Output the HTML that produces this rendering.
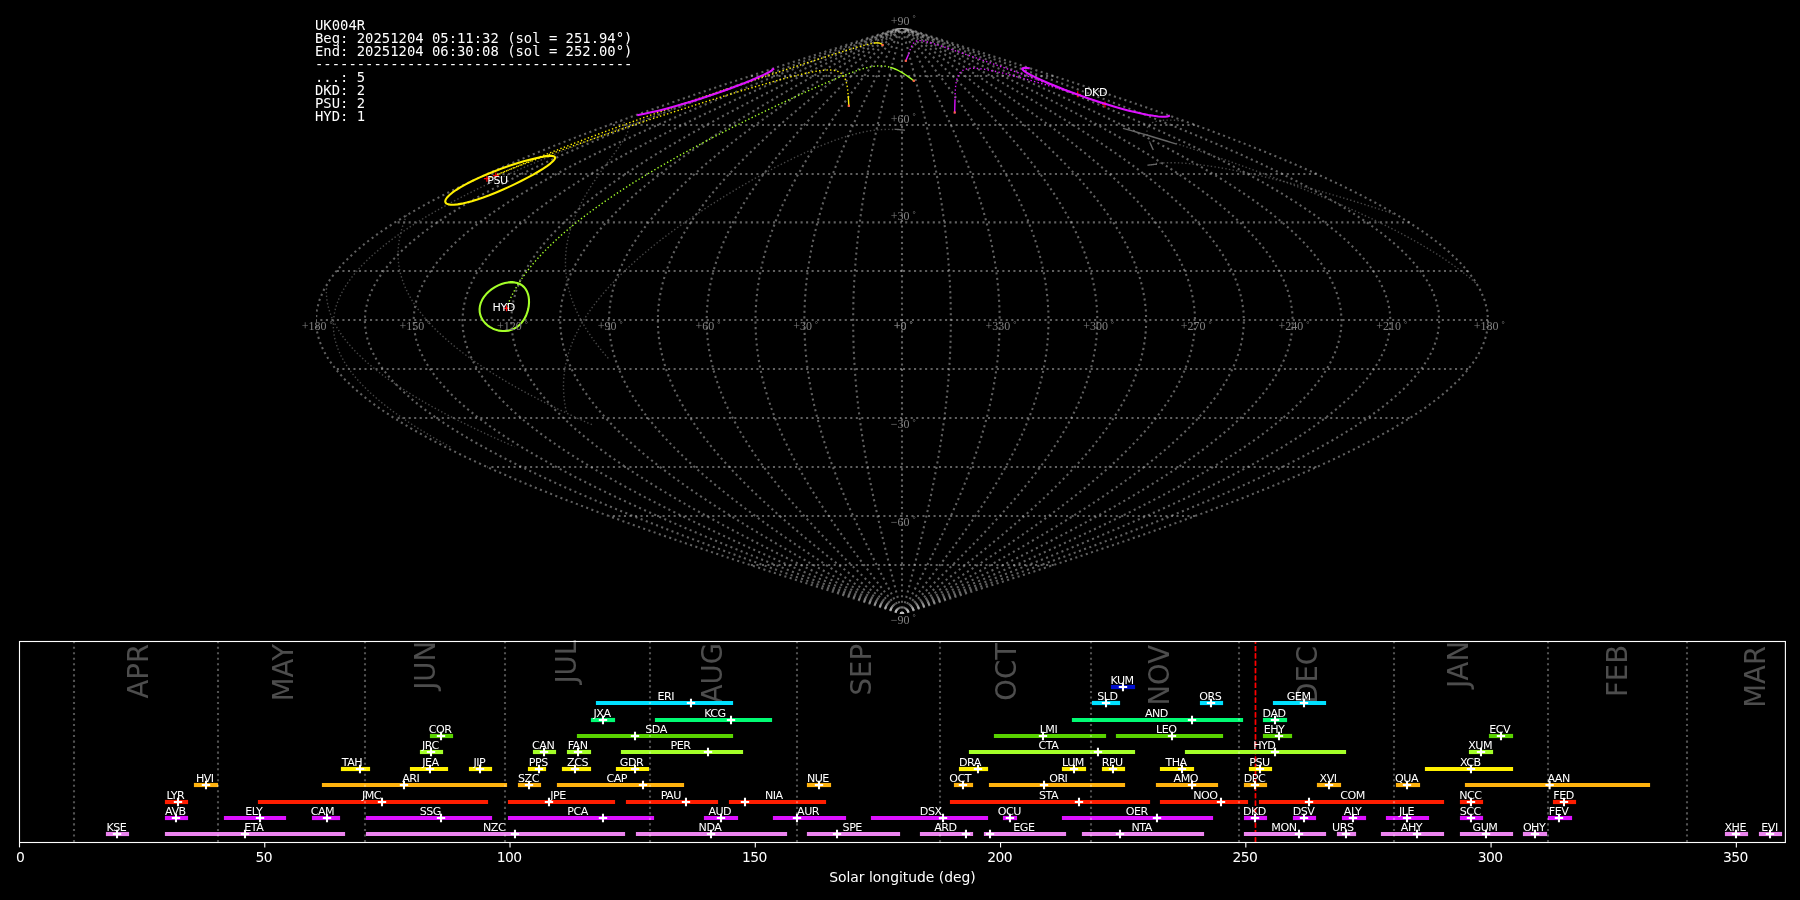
<!DOCTYPE html>
<html lang="en"><head><meta charset="utf-8"><title>UK004R shower association</title>
<style>html,body{margin:0;padding:0;background:#000;overflow:hidden}svg{display:block;filter:opacity(1)}</style></head>
<body>
<svg width="1800" height="900" viewBox="0 0 1800 900">
<rect width="1800" height="900" fill="#000"/>
<defs><clipPath id="c1"><rect x="316" y="27.9" width="1173.5" height="586.1"/></clipPath></defs>
<g clip-path="url(#c1)" fill="none">
<g stroke="#c0c0c0" stroke-opacity="0.5" stroke-width="2.08" stroke-dasharray="2.08 3.44">
<path d="M902.00 613.90 L902.00 604.12 L902.00 594.34 L902.00 584.56 L902.00 574.78 L902.00 565.00 L902.00 555.22 L902.00 545.44 L902.00 535.66 L902.00 525.88 L902.00 516.10 L902.00 506.32 L902.00 496.54 L902.00 486.76 L902.00 476.98 L902.00 467.20 L902.00 457.42 L902.00 447.64 L902.00 437.86 L902.00 428.08 L902.00 418.30 L902.00 408.52 L902.00 398.74 L902.00 388.96 L902.00 379.18 L902.00 369.40 L902.00 359.62 L902.00 349.84 L902.00 340.06 L902.00 330.28 L902.00 320.50 L902.00 310.72 L902.00 300.94 L902.00 291.16 L902.00 281.38 L902.00 271.60 L902.00 261.82 L902.00 252.04 L902.00 242.26 L902.00 232.48 L902.00 222.70 L902.00 212.92 L902.00 203.14 L902.00 193.36 L902.00 183.58 L902.00 173.80 L902.00 164.02 L902.00 154.24 L902.00 144.46 L902.00 134.68 L902.00 124.90 L902.00 115.12 L902.00 105.34 L902.00 95.56 L902.00 85.78 L902.00 76.00 L902.00 66.22 L902.00 56.44 L902.00 46.66 L902.00 36.88 L902.00 27.10"/>
<path d="M902.00 613.90 L899.44 604.12 L896.89 594.34 L894.36 584.56 L891.85 574.78 L889.36 565.00 L886.91 555.22 L884.50 545.44 L882.13 535.66 L879.83 525.88 L877.58 516.10 L875.40 506.32 L873.29 496.54 L871.26 486.76 L869.32 476.98 L867.46 467.20 L865.70 457.42 L864.04 447.64 L862.49 437.86 L861.04 428.08 L859.70 418.30 L858.48 408.52 L857.38 398.74 L856.40 388.96 L855.55 379.18 L854.82 369.40 L854.23 359.62 L853.76 349.84 L853.43 340.06 L853.23 330.28 L853.16 320.50 L853.23 310.72 L853.43 300.94 L853.76 291.16 L854.23 281.38 L854.82 271.60 L855.55 261.82 L856.40 252.04 L857.38 242.26 L858.48 232.48 L859.70 222.70 L861.04 212.92 L862.49 203.14 L864.04 193.36 L865.70 183.58 L867.46 173.80 L869.32 164.02 L871.26 154.24 L873.29 144.46 L875.40 134.68 L877.58 124.90 L879.83 115.12 L882.13 105.34 L884.50 95.56 L886.91 85.78 L889.36 76.00 L891.85 66.22 L894.36 56.44 L896.89 46.66 L899.44 36.88 L902.00 27.10"/>
<path d="M902.00 613.90 L896.89 604.12 L891.79 594.34 L886.72 584.56 L881.69 574.78 L876.72 565.00 L871.82 555.22 L866.99 545.44 L862.27 535.66 L857.65 525.88 L853.16 516.10 L848.80 506.32 L844.59 496.54 L840.53 486.76 L836.64 476.98 L832.93 467.20 L829.41 457.42 L826.09 447.64 L822.98 437.86 L820.08 428.08 L817.41 418.30 L814.97 408.52 L812.76 398.74 L810.81 388.96 L809.10 379.18 L807.65 369.40 L806.45 359.62 L805.52 349.84 L804.86 340.06 L804.45 330.28 L804.32 320.50 L804.45 310.72 L804.86 300.94 L805.52 291.16 L806.45 281.38 L807.65 271.60 L809.10 261.82 L810.81 252.04 L812.76 242.26 L814.97 232.48 L817.41 222.70 L820.08 212.92 L822.98 203.14 L826.09 193.36 L829.41 183.58 L832.93 173.80 L836.64 164.02 L840.53 154.24 L844.59 144.46 L848.80 134.68 L853.16 124.90 L857.65 115.12 L862.27 105.34 L866.99 95.56 L871.82 85.78 L876.72 76.00 L881.69 66.22 L886.72 56.44 L891.79 46.66 L896.89 36.88 L902.00 27.10"/>
<path d="M902.00 613.90 L894.33 604.12 L886.68 594.34 L879.08 584.56 L871.54 574.78 L864.08 565.00 L856.72 555.22 L849.49 545.44 L842.40 535.66 L835.48 525.88 L828.74 516.10 L822.20 506.32 L815.88 496.54 L809.79 486.76 L803.96 476.98 L798.39 467.20 L793.11 457.42 L788.13 447.64 L783.46 437.86 L779.12 428.08 L775.11 418.30 L771.45 408.52 L768.15 398.74 L765.21 388.96 L762.65 379.18 L760.47 369.40 L758.68 359.62 L757.28 349.84 L756.28 340.06 L755.68 330.28 L755.48 320.50 L755.68 310.72 L756.28 300.94 L757.28 291.16 L758.68 281.38 L760.47 271.60 L762.65 261.82 L765.21 252.04 L768.15 242.26 L771.45 232.48 L775.11 222.70 L779.12 212.92 L783.46 203.14 L788.13 193.36 L793.11 183.58 L798.39 173.80 L803.96 164.02 L809.79 154.24 L815.88 144.46 L822.20 134.68 L828.74 124.90 L835.48 115.12 L842.40 105.34 L849.49 95.56 L856.72 85.78 L864.08 76.00 L871.54 66.22 L879.08 56.44 L886.68 46.66 L894.33 36.88 L902.00 27.10"/>
<path d="M902.00 613.90 L891.78 604.12 L881.58 594.34 L871.44 584.56 L861.38 574.78 L851.44 565.00 L841.63 555.22 L831.99 545.44 L822.54 535.66 L813.31 525.88 L804.32 516.10 L795.60 506.32 L787.17 496.54 L779.06 486.76 L771.28 476.98 L763.86 467.20 L756.82 457.42 L750.18 447.64 L743.95 437.86 L738.16 428.08 L732.81 418.30 L727.93 408.52 L723.53 398.74 L719.62 388.96 L716.20 379.18 L713.30 369.40 L710.91 359.62 L709.05 349.84 L707.71 340.06 L706.91 330.28 L706.64 320.50 L706.91 310.72 L707.71 300.94 L709.05 291.16 L710.91 281.38 L713.30 271.60 L716.20 261.82 L719.62 252.04 L723.53 242.26 L727.93 232.48 L732.81 222.70 L738.16 212.92 L743.95 203.14 L750.18 193.36 L756.82 183.58 L763.86 173.80 L771.28 164.02 L779.06 154.24 L787.17 144.46 L795.60 134.68 L804.32 124.90 L813.31 115.12 L822.54 105.34 L831.99 95.56 L841.63 85.78 L851.44 76.00 L861.38 66.22 L871.44 56.44 L881.58 46.66 L891.78 36.88 L902.00 27.10"/>
<path d="M902.00 613.90 L889.22 604.12 L876.47 594.34 L863.80 584.56 L851.23 574.78 L838.80 565.00 L826.54 555.22 L814.49 545.44 L802.67 535.66 L791.14 525.88 L779.90 516.10 L769.00 506.32 L758.46 496.54 L748.32 486.76 L738.60 476.98 L729.32 467.20 L720.52 457.42 L712.22 447.64 L704.44 437.86 L697.20 428.08 L690.52 418.30 L684.42 408.52 L678.91 398.74 L674.02 388.96 L669.75 379.18 L666.12 369.40 L663.14 359.62 L660.81 349.84 L659.14 340.06 L658.13 330.28 L657.80 320.50 L658.13 310.72 L659.14 300.94 L660.81 291.16 L663.14 281.38 L666.12 271.60 L669.75 261.82 L674.02 252.04 L678.91 242.26 L684.42 232.48 L690.52 222.70 L697.20 212.92 L704.44 203.14 L712.22 193.36 L720.52 183.58 L729.32 173.80 L738.60 164.02 L748.32 154.24 L758.46 144.46 L769.00 134.68 L779.90 124.90 L791.14 115.12 L802.67 105.34 L814.49 95.56 L826.54 85.78 L838.80 76.00 L851.23 66.22 L863.80 56.44 L876.47 46.66 L889.22 36.88 L902.00 27.10"/>
<path d="M902.00 613.90 L886.66 604.12 L871.37 594.34 L856.16 584.56 L841.07 574.78 L826.16 565.00 L811.45 555.22 L796.98 545.44 L782.81 535.66 L768.96 525.88 L755.48 516.10 L742.40 506.32 L729.76 496.54 L717.58 486.76 L705.92 476.98 L694.79 467.20 L684.23 457.42 L674.27 447.64 L664.93 437.86 L656.24 428.08 L648.22 418.30 L640.90 408.52 L634.29 398.74 L628.42 388.96 L623.30 379.18 L618.95 369.40 L615.36 359.62 L612.57 349.84 L610.57 340.06 L609.36 330.28 L608.96 320.50 L609.36 310.72 L610.57 300.94 L612.57 291.16 L615.36 281.38 L618.95 271.60 L623.30 261.82 L628.42 252.04 L634.29 242.26 L640.90 232.48 L648.22 222.70 L656.24 212.92 L664.93 203.14 L674.27 193.36 L684.23 183.58 L694.79 173.80 L705.92 164.02 L717.58 154.24 L729.76 144.46 L742.40 134.68 L755.48 124.90 L768.96 115.12 L782.81 105.34 L796.98 95.56 L811.45 85.78 L826.16 76.00 L841.07 66.22 L856.16 56.44 L871.37 46.66 L886.66 36.88 L902.00 27.10"/>
<path d="M902.00 613.90 L884.11 604.12 L866.26 594.34 L848.52 584.56 L830.92 574.78 L813.51 565.00 L796.35 555.22 L779.48 545.44 L762.94 535.66 L746.79 525.88 L731.06 516.10 L715.80 506.32 L701.05 496.54 L686.85 486.76 L673.24 476.98 L660.25 467.20 L647.93 457.42 L636.31 447.64 L625.41 437.86 L615.28 428.08 L605.92 418.30 L597.38 408.52 L589.68 398.74 L582.83 388.96 L576.85 379.18 L571.77 369.40 L567.59 359.62 L564.33 349.84 L561.99 340.06 L560.59 330.28 L560.12 320.50 L560.59 310.72 L561.99 300.94 L564.33 291.16 L567.59 281.38 L571.77 271.60 L576.85 261.82 L582.83 252.04 L589.68 242.26 L597.38 232.48 L605.92 222.70 L615.28 212.92 L625.41 203.14 L636.31 193.36 L647.93 183.58 L660.25 173.80 L673.24 164.02 L686.85 154.24 L701.05 144.46 L715.80 134.68 L731.06 124.90 L746.79 115.12 L762.94 105.34 L779.48 95.56 L796.35 85.78 L813.51 76.00 L830.92 66.22 L848.52 56.44 L866.26 46.66 L884.11 36.88 L902.00 27.10"/>
<path d="M902.00 613.90 L881.55 604.12 L861.16 594.34 L840.88 584.56 L820.76 574.78 L800.87 565.00 L781.26 555.22 L761.98 545.44 L743.08 535.66 L724.62 525.88 L706.64 516.10 L689.20 506.32 L672.34 496.54 L656.11 486.76 L640.56 476.98 L625.72 467.20 L611.64 457.42 L598.35 447.64 L585.90 437.86 L574.31 428.08 L563.63 418.30 L553.87 408.52 L545.06 398.74 L537.23 388.96 L530.40 379.18 L524.59 369.40 L519.82 359.62 L516.09 349.84 L513.42 340.06 L511.82 330.28 L511.28 320.50 L511.82 310.72 L513.42 300.94 L516.09 291.16 L519.82 281.38 L524.59 271.60 L530.40 261.82 L537.23 252.04 L545.06 242.26 L553.87 232.48 L563.63 222.70 L574.31 212.92 L585.90 203.14 L598.35 193.36 L611.64 183.58 L625.72 173.80 L640.56 164.02 L656.11 154.24 L672.34 144.46 L689.20 134.68 L706.64 124.90 L724.62 115.12 L743.08 105.34 L761.98 95.56 L781.26 85.78 L800.87 76.00 L820.76 66.22 L840.88 56.44 L861.16 46.66 L881.55 36.88 L902.00 27.10"/>
<path d="M902.00 613.90 L879.00 604.12 L856.05 594.34 L833.24 584.56 L810.61 574.78 L788.23 565.00 L766.17 555.22 L744.48 545.44 L723.21 535.66 L702.44 525.88 L682.22 516.10 L662.60 506.32 L643.63 496.54 L625.38 486.76 L607.88 476.98 L591.18 467.20 L575.34 457.42 L560.40 447.64 L546.39 437.86 L533.35 428.08 L521.33 418.30 L510.35 408.52 L500.44 398.74 L491.64 388.96 L483.95 379.18 L477.42 369.40 L472.05 359.62 L467.85 349.84 L464.85 340.06 L463.04 330.28 L462.44 320.50 L463.04 310.72 L464.85 300.94 L467.85 291.16 L472.05 281.38 L477.42 271.60 L483.95 261.82 L491.64 252.04 L500.44 242.26 L510.35 232.48 L521.33 222.70 L533.35 212.92 L546.39 203.14 L560.40 193.36 L575.34 183.58 L591.18 173.80 L607.88 164.02 L625.38 154.24 L643.63 144.46 L662.60 134.68 L682.22 124.90 L702.44 115.12 L723.21 105.34 L744.48 95.56 L766.17 85.78 L788.23 76.00 L810.61 66.22 L833.24 56.44 L856.05 46.66 L879.00 36.88 L902.00 27.10"/>
<path d="M902.00 613.90 L876.44 604.12 L850.95 594.34 L825.60 584.56 L800.46 574.78 L775.59 565.00 L751.08 555.22 L726.97 545.44 L703.35 535.66 L680.27 525.88 L657.80 516.10 L636.00 506.32 L614.93 496.54 L594.64 486.76 L575.20 476.98 L556.65 467.20 L539.05 457.42 L522.44 447.64 L506.88 437.86 L492.39 428.08 L479.03 418.30 L466.83 408.52 L455.82 398.74 L446.04 388.96 L437.50 379.18 L430.24 369.40 L424.27 359.62 L419.61 349.84 L416.28 340.06 L414.27 330.28 L413.60 320.50 L414.27 310.72 L416.28 300.94 L419.61 291.16 L424.27 281.38 L430.24 271.60 L437.50 261.82 L446.04 252.04 L455.82 242.26 L466.83 232.48 L479.03 222.70 L492.39 212.92 L506.88 203.14 L522.44 193.36 L539.05 183.58 L556.65 173.80 L575.20 164.02 L594.64 154.24 L614.93 144.46 L636.00 134.68 L657.80 124.90 L680.27 115.12 L703.35 105.34 L726.97 95.56 L751.08 85.78 L775.59 76.00 L800.46 66.22 L825.60 56.44 L850.95 46.66 L876.44 36.88 L902.00 27.10"/>
<path d="M902.00 613.90 L873.88 604.12 L845.84 594.34 L817.96 584.56 L790.30 574.78 L762.95 565.00 L735.98 555.22 L709.47 545.44 L683.48 535.66 L658.10 525.88 L633.38 516.10 L609.40 506.32 L586.22 496.54 L563.90 486.76 L542.52 476.98 L522.11 467.20 L502.75 457.42 L484.49 447.64 L467.36 437.86 L451.43 428.08 L436.74 418.30 L423.32 408.52 L411.21 398.74 L400.44 388.96 L391.05 379.18 L383.07 369.40 L376.50 359.62 L371.37 349.84 L367.70 340.06 L365.50 330.28 L364.76 320.50 L365.50 310.72 L367.70 300.94 L371.37 291.16 L376.50 281.38 L383.07 271.60 L391.05 261.82 L400.44 252.04 L411.21 242.26 L423.32 232.48 L436.74 222.70 L451.43 212.92 L467.36 203.14 L484.49 193.36 L502.75 183.58 L522.11 173.80 L542.52 164.02 L563.90 154.24 L586.22 144.46 L609.40 134.68 L633.38 124.90 L658.10 115.12 L683.48 105.34 L709.47 95.56 L735.98 85.78 L762.95 76.00 L790.30 66.22 L817.96 56.44 L845.84 46.66 L873.88 36.88 L902.00 27.10"/>
<path d="M902.00 613.90 L871.33 604.12 L840.74 594.34 L810.32 584.56 L780.15 574.78 L750.31 565.00 L720.89 555.22 L691.97 545.44 L663.62 535.66 L635.93 525.88 L608.96 516.10 L582.80 506.32 L557.51 496.54 L533.17 486.76 L509.84 476.98 L487.58 467.20 L466.46 457.42 L446.53 447.64 L427.85 437.86 L410.47 428.08 L394.44 418.30 L379.80 408.52 L366.59 398.74 L354.85 388.96 L344.60 379.18 L335.89 369.40 L328.73 359.62 L323.14 349.84 L319.13 340.06 L316.72 330.28 L315.92 320.50 L316.72 310.72 L319.13 300.94 L323.14 291.16 L328.73 281.38 L335.89 271.60 L344.60 261.82 L354.85 252.04 L366.59 242.26 L379.80 232.48 L394.44 222.70 L410.47 212.92 L427.85 203.14 L446.53 193.36 L466.46 183.58 L487.58 173.80 L509.84 164.02 L533.17 154.24 L557.51 144.46 L582.80 134.68 L608.96 124.90 L635.93 115.12 L663.62 105.34 L691.97 95.56 L720.89 85.78 L750.31 76.00 L780.15 66.22 L810.32 56.44 L840.74 46.66 L871.33 36.88 L902.00 27.10"/>
<path d="M902.00 613.90 L932.67 604.12 L963.26 594.34 L993.68 584.56 L1023.85 574.78 L1053.69 565.00 L1083.11 555.22 L1112.03 545.44 L1140.38 535.66 L1168.07 525.88 L1195.04 516.10 L1221.20 506.32 L1246.49 496.54 L1270.83 486.76 L1294.16 476.98 L1316.42 467.20 L1337.54 457.42 L1357.47 447.64 L1376.15 437.86 L1393.53 428.08 L1409.56 418.30 L1424.20 408.52 L1437.41 398.74 L1449.15 388.96 L1459.39 379.18 L1468.11 369.40 L1475.27 359.62 L1480.86 349.84 L1484.87 340.06 L1487.28 330.28 L1488.08 320.50 L1487.28 310.72 L1484.87 300.94 L1480.86 291.16 L1475.27 281.38 L1468.11 271.60 L1459.39 261.82 L1449.15 252.04 L1437.41 242.26 L1424.20 232.48 L1409.56 222.70 L1393.53 212.92 L1376.15 203.14 L1357.47 193.36 L1337.54 183.58 L1316.42 173.80 L1294.16 164.02 L1270.83 154.24 L1246.49 144.46 L1221.20 134.68 L1195.04 124.90 L1168.07 115.12 L1140.38 105.34 L1112.03 95.56 L1083.11 85.78 L1053.69 76.00 L1023.85 66.22 L993.68 56.44 L963.26 46.66 L932.67 36.88 L902.00 27.10"/>
<path d="M902.00 613.90 L930.12 604.12 L958.16 594.34 L986.04 584.56 L1013.70 574.78 L1041.05 565.00 L1068.02 555.22 L1094.53 545.44 L1120.52 535.66 L1145.90 525.88 L1170.62 516.10 L1194.60 506.32 L1217.78 496.54 L1240.10 486.76 L1261.48 476.98 L1281.89 467.20 L1301.25 457.42 L1319.51 447.64 L1336.64 437.86 L1352.57 428.08 L1367.26 418.30 L1380.68 408.52 L1392.79 398.74 L1403.56 388.96 L1412.95 379.18 L1420.93 369.40 L1427.50 359.62 L1432.63 349.84 L1436.30 340.06 L1438.50 330.28 L1439.24 320.50 L1438.50 310.72 L1436.30 300.94 L1432.63 291.16 L1427.50 281.38 L1420.93 271.60 L1412.95 261.82 L1403.56 252.04 L1392.79 242.26 L1380.68 232.48 L1367.26 222.70 L1352.57 212.92 L1336.64 203.14 L1319.51 193.36 L1301.25 183.58 L1281.89 173.80 L1261.48 164.02 L1240.10 154.24 L1217.78 144.46 L1194.60 134.68 L1170.62 124.90 L1145.90 115.12 L1120.52 105.34 L1094.53 95.56 L1068.02 85.78 L1041.05 76.00 L1013.70 66.22 L986.04 56.44 L958.16 46.66 L930.12 36.88 L902.00 27.10"/>
<path d="M902.00 613.90 L927.56 604.12 L953.05 594.34 L978.40 584.56 L1003.54 574.78 L1028.41 565.00 L1052.92 555.22 L1077.03 545.44 L1100.65 535.66 L1123.73 525.88 L1146.20 516.10 L1168.00 506.32 L1189.07 496.54 L1209.36 486.76 L1228.80 476.98 L1247.35 467.20 L1264.95 457.42 L1281.56 447.64 L1297.12 437.86 L1311.61 428.08 L1324.97 418.30 L1337.17 408.52 L1348.18 398.74 L1357.96 388.96 L1366.50 379.18 L1373.76 369.40 L1379.73 359.62 L1384.39 349.84 L1387.72 340.06 L1389.73 330.28 L1390.40 320.50 L1389.73 310.72 L1387.72 300.94 L1384.39 291.16 L1379.73 281.38 L1373.76 271.60 L1366.50 261.82 L1357.96 252.04 L1348.18 242.26 L1337.17 232.48 L1324.97 222.70 L1311.61 212.92 L1297.12 203.14 L1281.56 193.36 L1264.95 183.58 L1247.35 173.80 L1228.80 164.02 L1209.36 154.24 L1189.07 144.46 L1168.00 134.68 L1146.20 124.90 L1123.73 115.12 L1100.65 105.34 L1077.03 95.56 L1052.92 85.78 L1028.41 76.00 L1003.54 66.22 L978.40 56.44 L953.05 46.66 L927.56 36.88 L902.00 27.10"/>
<path d="M902.00 613.90 L925.00 604.12 L947.95 594.34 L970.76 584.56 L993.39 574.78 L1015.77 565.00 L1037.83 555.22 L1059.52 545.44 L1080.79 535.66 L1101.56 525.88 L1121.78 516.10 L1141.40 506.32 L1160.37 496.54 L1178.62 486.76 L1196.12 476.98 L1212.82 467.20 L1228.66 457.42 L1243.60 447.64 L1257.61 437.86 L1270.65 428.08 L1282.67 418.30 L1293.65 408.52 L1303.56 398.74 L1312.36 388.96 L1320.05 379.18 L1326.58 369.40 L1331.95 359.62 L1336.15 349.84 L1339.15 340.06 L1340.96 330.28 L1341.56 320.50 L1340.96 310.72 L1339.15 300.94 L1336.15 291.16 L1331.95 281.38 L1326.58 271.60 L1320.05 261.82 L1312.36 252.04 L1303.56 242.26 L1293.65 232.48 L1282.67 222.70 L1270.65 212.92 L1257.61 203.14 L1243.60 193.36 L1228.66 183.58 L1212.82 173.80 L1196.12 164.02 L1178.62 154.24 L1160.37 144.46 L1141.40 134.68 L1121.78 124.90 L1101.56 115.12 L1080.79 105.34 L1059.52 95.56 L1037.83 85.78 L1015.77 76.00 L993.39 66.22 L970.76 56.44 L947.95 46.66 L925.00 36.88 L902.00 27.10"/>
<path d="M902.00 613.90 L922.45 604.12 L942.84 594.34 L963.12 584.56 L983.24 574.78 L1003.13 565.00 L1022.74 555.22 L1042.02 545.44 L1060.92 535.66 L1079.38 525.88 L1097.36 516.10 L1114.80 506.32 L1131.66 496.54 L1147.89 486.76 L1163.44 476.98 L1178.28 467.20 L1192.36 457.42 L1205.65 447.64 L1218.10 437.86 L1229.69 428.08 L1240.37 418.30 L1250.13 408.52 L1258.94 398.74 L1266.77 388.96 L1273.60 379.18 L1279.41 369.40 L1284.18 359.62 L1287.91 349.84 L1290.58 340.06 L1292.18 330.28 L1292.72 320.50 L1292.18 310.72 L1290.58 300.94 L1287.91 291.16 L1284.18 281.38 L1279.41 271.60 L1273.60 261.82 L1266.77 252.04 L1258.94 242.26 L1250.13 232.48 L1240.37 222.70 L1229.69 212.92 L1218.10 203.14 L1205.65 193.36 L1192.36 183.58 L1178.28 173.80 L1163.44 164.02 L1147.89 154.24 L1131.66 144.46 L1114.80 134.68 L1097.36 124.90 L1079.38 115.12 L1060.92 105.34 L1042.02 95.56 L1022.74 85.78 L1003.13 76.00 L983.24 66.22 L963.12 56.44 L942.84 46.66 L922.45 36.88 L902.00 27.10"/>
<path d="M902.00 613.90 L919.89 604.12 L937.74 594.34 L955.48 584.56 L973.08 574.78 L990.49 565.00 L1007.65 555.22 L1024.52 545.44 L1041.06 535.66 L1057.21 525.88 L1072.94 516.10 L1088.20 506.32 L1102.95 496.54 L1117.15 486.76 L1130.76 476.98 L1143.75 467.20 L1156.07 457.42 L1167.69 447.64 L1178.59 437.86 L1188.72 428.08 L1198.08 418.30 L1206.62 408.52 L1214.32 398.74 L1221.17 388.96 L1227.15 379.18 L1232.23 369.40 L1236.41 359.62 L1239.67 349.84 L1242.01 340.06 L1243.41 330.28 L1243.88 320.50 L1243.41 310.72 L1242.01 300.94 L1239.67 291.16 L1236.41 281.38 L1232.23 271.60 L1227.15 261.82 L1221.17 252.04 L1214.32 242.26 L1206.62 232.48 L1198.08 222.70 L1188.72 212.92 L1178.59 203.14 L1167.69 193.36 L1156.07 183.58 L1143.75 173.80 L1130.76 164.02 L1117.15 154.24 L1102.95 144.46 L1088.20 134.68 L1072.94 124.90 L1057.21 115.12 L1041.06 105.34 L1024.52 95.56 L1007.65 85.78 L990.49 76.00 L973.08 66.22 L955.48 56.44 L937.74 46.66 L919.89 36.88 L902.00 27.10"/>
<path d="M902.00 613.90 L917.34 604.12 L932.63 594.34 L947.84 584.56 L962.93 574.78 L977.84 565.00 L992.55 555.22 L1007.02 545.44 L1021.19 535.66 L1035.04 525.88 L1048.52 516.10 L1061.60 506.32 L1074.24 496.54 L1086.42 486.76 L1098.08 476.98 L1109.21 467.20 L1119.77 457.42 L1129.73 447.64 L1139.07 437.86 L1147.76 428.08 L1155.78 418.30 L1163.10 408.52 L1169.71 398.74 L1175.58 388.96 L1180.70 379.18 L1185.05 369.40 L1188.64 359.62 L1191.43 349.84 L1193.43 340.06 L1194.64 330.28 L1195.04 320.50 L1194.64 310.72 L1193.43 300.94 L1191.43 291.16 L1188.64 281.38 L1185.05 271.60 L1180.70 261.82 L1175.58 252.04 L1169.71 242.26 L1163.10 232.48 L1155.78 222.70 L1147.76 212.92 L1139.07 203.14 L1129.73 193.36 L1119.77 183.58 L1109.21 173.80 L1098.08 164.02 L1086.42 154.24 L1074.24 144.46 L1061.60 134.68 L1048.52 124.90 L1035.04 115.12 L1021.19 105.34 L1007.02 95.56 L992.55 85.78 L977.84 76.00 L962.93 66.22 L947.84 56.44 L932.63 46.66 L917.34 36.88 L902.00 27.10"/>
<path d="M902.00 613.90 L914.78 604.12 L927.53 594.34 L940.20 584.56 L952.77 574.78 L965.20 565.00 L977.46 555.22 L989.51 545.44 L1001.33 535.66 L1012.86 525.88 L1024.10 516.10 L1035.00 506.32 L1045.54 496.54 L1055.68 486.76 L1065.40 476.98 L1074.68 467.20 L1083.48 457.42 L1091.78 447.64 L1099.56 437.86 L1106.80 428.08 L1113.48 418.30 L1119.58 408.52 L1125.09 398.74 L1129.98 388.96 L1134.25 379.18 L1137.88 369.40 L1140.86 359.62 L1143.19 349.84 L1144.86 340.06 L1145.87 330.28 L1146.20 320.50 L1145.87 310.72 L1144.86 300.94 L1143.19 291.16 L1140.86 281.38 L1137.88 271.60 L1134.25 261.82 L1129.98 252.04 L1125.09 242.26 L1119.58 232.48 L1113.48 222.70 L1106.80 212.92 L1099.56 203.14 L1091.78 193.36 L1083.48 183.58 L1074.68 173.80 L1065.40 164.02 L1055.68 154.24 L1045.54 144.46 L1035.00 134.68 L1024.10 124.90 L1012.86 115.12 L1001.33 105.34 L989.51 95.56 L977.46 85.78 L965.20 76.00 L952.77 66.22 L940.20 56.44 L927.53 46.66 L914.78 36.88 L902.00 27.10"/>
<path d="M902.00 613.90 L912.22 604.12 L922.42 594.34 L932.56 584.56 L942.62 574.78 L952.56 565.00 L962.37 555.22 L972.01 545.44 L981.46 535.66 L990.69 525.88 L999.68 516.10 L1008.40 506.32 L1016.83 496.54 L1024.94 486.76 L1032.72 476.98 L1040.14 467.20 L1047.18 457.42 L1053.82 447.64 L1060.05 437.86 L1065.84 428.08 L1071.19 418.30 L1076.07 408.52 L1080.47 398.74 L1084.38 388.96 L1087.80 379.18 L1090.70 369.40 L1093.09 359.62 L1094.95 349.84 L1096.29 340.06 L1097.09 330.28 L1097.36 320.50 L1097.09 310.72 L1096.29 300.94 L1094.95 291.16 L1093.09 281.38 L1090.70 271.60 L1087.80 261.82 L1084.38 252.04 L1080.47 242.26 L1076.07 232.48 L1071.19 222.70 L1065.84 212.92 L1060.05 203.14 L1053.82 193.36 L1047.18 183.58 L1040.14 173.80 L1032.72 164.02 L1024.94 154.24 L1016.83 144.46 L1008.40 134.68 L999.68 124.90 L990.69 115.12 L981.46 105.34 L972.01 95.56 L962.37 85.78 L952.56 76.00 L942.62 66.22 L932.56 56.44 L922.42 46.66 L912.22 36.88 L902.00 27.10"/>
<path d="M902.00 613.90 L909.67 604.12 L917.32 594.34 L924.92 584.56 L932.46 574.78 L939.92 565.00 L947.28 555.22 L954.51 545.44 L961.60 535.66 L968.52 525.88 L975.26 516.10 L981.80 506.32 L988.12 496.54 L994.21 486.76 L1000.04 476.98 L1005.61 467.20 L1010.89 457.42 L1015.87 447.64 L1020.54 437.86 L1024.88 428.08 L1028.89 418.30 L1032.55 408.52 L1035.85 398.74 L1038.79 388.96 L1041.35 379.18 L1043.53 369.40 L1045.32 359.62 L1046.72 349.84 L1047.72 340.06 L1048.32 330.28 L1048.52 320.50 L1048.32 310.72 L1047.72 300.94 L1046.72 291.16 L1045.32 281.38 L1043.53 271.60 L1041.35 261.82 L1038.79 252.04 L1035.85 242.26 L1032.55 232.48 L1028.89 222.70 L1024.88 212.92 L1020.54 203.14 L1015.87 193.36 L1010.89 183.58 L1005.61 173.80 L1000.04 164.02 L994.21 154.24 L988.12 144.46 L981.80 134.68 L975.26 124.90 L968.52 115.12 L961.60 105.34 L954.51 95.56 L947.28 85.78 L939.92 76.00 L932.46 66.22 L924.92 56.44 L917.32 46.66 L909.67 36.88 L902.00 27.10"/>
<path d="M902.00 613.90 L907.11 604.12 L912.21 594.34 L917.28 584.56 L922.31 574.78 L927.28 565.00 L932.18 555.22 L937.01 545.44 L941.73 535.66 L946.35 525.88 L950.84 516.10 L955.20 506.32 L959.41 496.54 L963.47 486.76 L967.36 476.98 L971.07 467.20 L974.59 457.42 L977.91 447.64 L981.02 437.86 L983.92 428.08 L986.59 418.30 L989.03 408.52 L991.24 398.74 L993.19 388.96 L994.90 379.18 L996.35 369.40 L997.55 359.62 L998.48 349.84 L999.14 340.06 L999.55 330.28 L999.68 320.50 L999.55 310.72 L999.14 300.94 L998.48 291.16 L997.55 281.38 L996.35 271.60 L994.90 261.82 L993.19 252.04 L991.24 242.26 L989.03 232.48 L986.59 222.70 L983.92 212.92 L981.02 203.14 L977.91 193.36 L974.59 183.58 L971.07 173.80 L967.36 164.02 L963.47 154.24 L959.41 144.46 L955.20 134.68 L950.84 124.90 L946.35 115.12 L941.73 105.34 L937.01 95.56 L932.18 85.78 L927.28 76.00 L922.31 66.22 L917.28 56.44 L912.21 46.66 L907.11 36.88 L902.00 27.10"/>
<path d="M902.00 613.90 L904.56 604.12 L907.11 594.34 L909.64 584.56 L912.15 574.78 L914.64 565.00 L917.09 555.22 L919.50 545.44 L921.87 535.66 L924.17 525.88 L926.42 516.10 L928.60 506.32 L930.71 496.54 L932.74 486.76 L934.68 476.98 L936.54 467.20 L938.30 457.42 L939.96 447.64 L941.51 437.86 L942.96 428.08 L944.30 418.30 L945.52 408.52 L946.62 398.74 L947.60 388.96 L948.45 379.18 L949.18 369.40 L949.77 359.62 L950.24 349.84 L950.57 340.06 L950.77 330.28 L950.84 320.50 L950.77 310.72 L950.57 300.94 L950.24 291.16 L949.77 281.38 L949.18 271.60 L948.45 261.82 L947.60 252.04 L946.62 242.26 L945.52 232.48 L944.30 222.70 L942.96 212.92 L941.51 203.14 L939.96 193.36 L938.30 183.58 L936.54 173.80 L934.68 164.02 L932.74 154.24 L930.71 144.46 L928.60 134.68 L926.42 124.90 L924.17 115.12 L921.87 105.34 L919.50 95.56 L917.09 85.78 L914.64 76.00 L912.15 66.22 L909.64 56.44 L907.11 46.66 L904.56 36.88 L902.00 27.10"/>
<path d="M902.00 613.90 L902.00 613.90 L902.00 613.90 L902.00 613.90 L902.00 613.90 L902.00 613.90 L902.00 613.90 L902.00 613.90 L902.00 613.90 L902.00 613.90 L902.00 613.90 L902.00 613.90 L902.00 613.90"/>
<path d="M902.00 613.90 L902.00 613.90 L902.00 613.90 L902.00 613.90 L902.00 613.90 L902.00 613.90 L902.00 613.90 L902.00 613.90 L902.00 613.90 L902.00 613.90 L902.00 613.90 L902.00 613.90 L902.00 613.90"/>
<path d="M902.00 565.00 L889.36 565.00 L876.72 565.00 L864.08 565.00 L851.44 565.00 L838.80 565.00 L826.16 565.00 L813.51 565.00 L800.87 565.00 L788.23 565.00 L775.59 565.00 L762.95 565.00 L750.31 565.00"/>
<path d="M1053.69 565.00 L1041.05 565.00 L1028.41 565.00 L1015.77 565.00 L1003.13 565.00 L990.49 565.00 L977.84 565.00 L965.20 565.00 L952.56 565.00 L939.92 565.00 L927.28 565.00 L914.64 565.00 L902.00 565.00"/>
<path d="M902.00 516.00 L877.58 516.00 L853.16 516.00 L828.74 516.00 L804.32 516.00 L779.90 516.00 L755.48 516.00 L731.06 516.00 L706.64 516.00 L682.22 516.00 L657.80 516.00 L633.38 516.00 L608.96 516.00"/>
<path d="M1195.04 516.00 L1170.62 516.00 L1146.20 516.00 L1121.78 516.00 L1097.36 516.00 L1072.94 516.00 L1048.52 516.00 L1024.10 516.00 L999.68 516.00 L975.26 516.00 L950.84 516.00 L926.42 516.00 L902.00 516.00"/>
<path d="M902.00 467.00 L867.46 467.00 L832.93 467.00 L798.39 467.00 L763.86 467.00 L729.32 467.00 L694.79 467.00 L660.25 467.00 L625.72 467.00 L591.18 467.00 L556.65 467.00 L522.11 467.00 L487.58 467.00"/>
<path d="M1316.42 467.00 L1281.89 467.00 L1247.35 467.00 L1212.82 467.00 L1178.28 467.00 L1143.75 467.00 L1109.21 467.00 L1074.68 467.00 L1040.14 467.00 L1005.61 467.00 L971.07 467.00 L936.54 467.00 L902.00 467.00"/>
<path d="M902.00 418.00 L859.70 418.00 L817.41 418.00 L775.11 418.00 L732.81 418.00 L690.52 418.00 L648.22 418.00 L605.92 418.00 L563.63 418.00 L521.33 418.00 L479.03 418.00 L436.74 418.00 L394.44 418.00"/>
<path d="M1409.56 418.00 L1367.26 418.00 L1324.97 418.00 L1282.67 418.00 L1240.37 418.00 L1198.08 418.00 L1155.78 418.00 L1113.48 418.00 L1071.19 418.00 L1028.89 418.00 L986.59 418.00 L944.30 418.00 L902.00 418.00"/>
<path d="M902.00 369.00 L854.82 369.00 L807.65 369.00 L760.47 369.00 L713.30 369.00 L666.12 369.00 L618.95 369.00 L571.77 369.00 L524.59 369.00 L477.42 369.00 L430.24 369.00 L383.07 369.00 L335.89 369.00"/>
<path d="M1468.11 369.00 L1420.93 369.00 L1373.76 369.00 L1326.58 369.00 L1279.41 369.00 L1232.23 369.00 L1185.05 369.00 L1137.88 369.00 L1090.70 369.00 L1043.53 369.00 L996.35 369.00 L949.18 369.00 L902.00 369.00"/>
<path d="M902.00 320.00 L853.16 320.00 L804.32 320.00 L755.48 320.00 L706.64 320.00 L657.80 320.00 L608.96 320.00 L560.12 320.00 L511.28 320.00 L462.44 320.00 L413.60 320.00 L364.76 320.00 L315.92 320.00"/>
<path d="M1488.08 320.00 L1439.24 320.00 L1390.40 320.00 L1341.56 320.00 L1292.72 320.00 L1243.88 320.00 L1195.04 320.00 L1146.20 320.00 L1097.36 320.00 L1048.52 320.00 L999.68 320.00 L950.84 320.00 L902.00 320.00"/>
<path d="M902.00 271.00 L854.82 271.00 L807.65 271.00 L760.47 271.00 L713.30 271.00 L666.12 271.00 L618.95 271.00 L571.77 271.00 L524.59 271.00 L477.42 271.00 L430.24 271.00 L383.07 271.00 L335.89 271.00"/>
<path d="M1468.11 271.00 L1420.93 271.00 L1373.76 271.00 L1326.58 271.00 L1279.41 271.00 L1232.23 271.00 L1185.05 271.00 L1137.88 271.00 L1090.70 271.00 L1043.53 271.00 L996.35 271.00 L949.18 271.00 L902.00 271.00"/>
<path d="M902.00 222.40 L859.70 222.40 L817.41 222.40 L775.11 222.40 L732.81 222.40 L690.52 222.40 L648.22 222.40 L605.92 222.40 L563.63 222.40 L521.33 222.40 L479.03 222.40 L436.74 222.40 L394.44 222.40"/>
<path d="M1409.56 222.40 L1367.26 222.40 L1324.97 222.40 L1282.67 222.40 L1240.37 222.40 L1198.08 222.40 L1155.78 222.40 L1113.48 222.40 L1071.19 222.40 L1028.89 222.40 L986.59 222.40 L944.30 222.40 L902.00 222.40"/>
<path d="M902.00 174.00 L867.46 174.00 L832.93 174.00 L798.39 174.00 L763.86 174.00 L729.32 174.00 L694.79 174.00 L660.25 174.00 L625.72 174.00 L591.18 174.00 L556.65 174.00 L522.11 174.00 L487.58 174.00"/>
<path d="M1316.42 174.00 L1281.89 174.00 L1247.35 174.00 L1212.82 174.00 L1178.28 174.00 L1143.75 174.00 L1109.21 174.00 L1074.68 174.00 L1040.14 174.00 L1005.61 174.00 L971.07 174.00 L936.54 174.00 L902.00 174.00"/>
<path d="M902.00 125.00 L877.58 125.00 L853.16 125.00 L828.74 125.00 L804.32 125.00 L779.90 125.00 L755.48 125.00 L731.06 125.00 L706.64 125.00 L682.22 125.00 L657.80 125.00 L633.38 125.00 L608.96 125.00"/>
<path d="M1195.04 125.00 L1170.62 125.00 L1146.20 125.00 L1121.78 125.00 L1097.36 125.00 L1072.94 125.00 L1048.52 125.00 L1024.10 125.00 L999.68 125.00 L975.26 125.00 L950.84 125.00 L926.42 125.00 L902.00 125.00"/>
<path d="M902.00 76.00 L889.36 76.00 L876.72 76.00 L864.08 76.00 L851.44 76.00 L838.80 76.00 L826.16 76.00 L813.51 76.00 L800.87 76.00 L788.23 76.00 L775.59 76.00 L762.95 76.00 L750.31 76.00"/>
<path d="M1053.69 76.00 L1041.05 76.00 L1028.41 76.00 L1015.77 76.00 L1003.13 76.00 L990.49 76.00 L977.84 76.00 L965.20 76.00 L952.56 76.00 L939.92 76.00 L927.28 76.00 L914.64 76.00 L902.00 76.00"/>
<path d="M902.00 27.10 L902.00 27.10 L902.00 27.10 L902.00 27.10 L902.00 27.10 L902.00 27.10 L902.00 27.10 L902.00 27.10 L902.00 27.10 L902.00 27.10 L902.00 27.10 L902.00 27.10 L902.00 27.10"/>
<path d="M902.00 27.10 L902.00 27.10 L902.00 27.10 L902.00 27.10 L902.00 27.10 L902.00 27.10 L902.00 27.10 L902.00 27.10 L902.00 27.10 L902.00 27.10 L902.00 27.10 L902.00 27.10 L902.00 27.10"/>
</g>
<g stroke="#666" stroke-opacity="0.7" stroke-width="1.39" stroke-dasharray="1.39 2.29">
<path d="M893.27 129.47 L892.37 129.44 L891.46 129.41 L890.56 129.39 L889.65 129.38 L888.75 129.38 L887.84 129.38 L886.94 129.39 L886.03 129.41 L885.12 129.44 L884.21 129.47 L883.30 129.51 L882.39 129.56 L881.47 129.61 L880.56 129.67 L879.64 129.74 L878.72 129.82 L877.80 129.90 L876.88 129.99 L875.96 130.08 L875.04 130.19 L874.11 130.30 L873.19 130.42 L872.26 130.54 L871.33 130.67 L870.39 130.81 L869.46 130.96 L868.52 131.11 L867.59 131.27 L866.65 131.44 L865.70 131.61 L864.76 131.79 L863.81 131.98 L862.86 132.17 L861.91 132.37 L860.96 132.58 L860.01 132.79 L859.05 133.01 L858.09 133.24 L857.13 133.47 L856.16 133.71 L855.20 133.95 L854.23 134.21 L853.26 134.46 L852.28 134.73 L851.31 135.00 L850.33 135.28 L849.35 135.56 L848.36 135.85 L847.38 136.14 L846.39 136.44 L845.40 136.75 L844.40 137.06 L843.41 137.38 L842.41 137.70 L841.41 138.03 L840.40 138.37 L839.40 138.71 L838.39 139.06 L837.38 139.41 L836.36 139.77 L835.35 140.13 L834.33 140.50 L833.31 140.87 L832.28 141.25 L831.26 141.63 L830.23 142.02 L829.20 142.42 L828.17 142.82 L827.13 143.22 L826.09 143.63 L825.05 144.04 L824.01 144.46 L822.96 144.88 L821.92 145.31 L820.87 145.74 L819.81 146.18 L818.76 146.62 L817.70 147.07 L816.64 147.52 L815.58 147.98 L814.52 148.44 L813.45 148.90 L812.39 149.37 L811.32 149.84 L810.25 150.32 L809.17 150.80 L808.10 151.28 L807.02 151.77 L805.94 152.26 L804.86 152.76 L803.78 153.26 L802.69 153.76 L801.61 154.27 L800.52 154.78 L799.43 155.30 L798.34 155.82 L797.24 156.34 L796.15 156.86 L795.05 157.39 L793.95 157.93 L792.86 158.46 L791.75 159.00 L790.65 159.55 L789.55 160.09 L788.44 160.64 L787.34 161.19 L786.23 161.75 L785.12 162.31 L784.01 162.87 L782.90 163.44 L781.79 164.00 L780.68 164.57 L779.57 165.15 L778.45 165.73 L777.34 166.31 L776.22 166.89 L775.10 167.47 L773.99 168.06 L772.87 168.65 L771.75 169.25 L770.63 169.84 L769.51 170.44 L768.39 171.04 L767.27 171.64 L766.15 172.25 L765.03 172.86 L763.90 173.47 L762.78 174.08 L761.66 174.70 L760.54 175.32 L759.41 175.94 L758.29 176.56 L757.17 177.19 L756.04 177.81 L754.92 178.44 L753.80 179.08 L752.67 179.71 L751.55 180.35 L750.43 180.98 L749.30 181.62 L748.18 182.27 L747.06 182.91 L745.94 183.56 L744.82 184.20 L743.70 184.85 L742.58 185.51 L741.46 186.16 L740.34 186.81 L739.22 187.47 L738.10 188.13 L736.98 188.79 L735.87 189.45 L734.75 190.12 L733.64 190.79 L732.52 191.45 L731.41 192.12 L730.30 192.79 L729.19 193.47 L728.08 194.14 L726.97 194.82 L725.86 195.49 L724.75 196.17 L723.65 196.85 L722.54 197.54 L721.44 198.22 L720.34 198.90 L719.24 199.59 L718.14 200.28 L717.04 200.97 L715.95 201.66 L714.85 202.35 L713.76 203.04 L712.67 203.74 L711.58 204.43 L710.49 205.13 L709.41 205.83 L708.32 206.53 L707.24 207.23 L706.16 207.93 L705.08 208.63 L704.01 209.34 L702.93 210.05 L701.86 210.75 L700.79 211.46 L699.72 212.17 L698.66 212.88 L697.59 213.59 L696.53 214.30 L695.47 215.02 L694.41 215.73 L693.36 216.45 L692.30 217.16 L691.25 217.88 L690.21 218.60 L689.16 219.32 L688.12 220.04 L687.08 220.76 L686.04 221.49 L685.01 222.21 L683.97 222.93 L682.94 223.66 L681.92 224.39 L680.89 225.11 L679.87 225.84 L678.85 226.57 L677.83 227.30 L676.82 228.03 L675.81 228.76 L674.80 229.49 L673.80 230.23 L672.80 230.96 L671.80 231.70 L670.80 232.43 L669.81 233.17 L668.82 233.90 L667.84 234.64 L666.86 235.38 L665.88 236.12 L664.90 236.86 L663.93 237.60 L662.96 238.34 L661.99 239.08 L661.03 239.83 L660.07 240.57 L659.11 241.31 L658.16 242.06 L657.21 242.80 L656.27 243.55 L655.32 244.30 L654.39 245.04 L653.45 245.79 L652.52 246.54 L651.59 247.29 L650.67 248.04 L649.75 248.79 L648.83 249.54 L647.92 250.29 L647.01 251.04 L646.11 251.79 L645.21 252.55 L644.31 253.30 L643.42 254.05 L642.53 254.81 L641.64 255.56 L640.76 256.32 L639.89 257.07 L639.01 257.83 L638.15 258.59 L637.28 259.34 L636.42 260.10 L635.56 260.86 L634.71 261.62 L633.86 262.38 L633.02 263.14 L632.18 263.90 L631.35 264.66 L630.51 265.42 L629.69 266.18 L628.87 266.94 L628.05 267.70 L627.23 268.46 L626.43 269.23 L625.62 269.99 L624.82 270.75 L624.03 271.52 L623.23 272.28 L622.45 273.04 L621.67 273.81 L620.89 274.57 L620.12 275.34 L619.35 276.10 L618.58 276.87 L617.82 277.64 L617.07 278.40 L616.32 279.17 L615.58 279.94 L614.84 280.70 L614.10 281.47 L613.37 282.24 L612.64 283.01 L611.92 283.78 L611.21 284.55 L610.50 285.31 L609.79 286.08 L609.09 286.85 L608.39 287.62 L607.70 288.39 L607.01 289.16 L606.33 289.93 L605.66 290.70 L604.98 291.47 L604.32 292.24 L603.65 293.01 L603.00 293.79 L602.35 294.56 L601.70 295.33 L601.06 296.10 L600.42 296.87 L599.79 297.64 L599.16 298.42 L598.54 299.19 L597.93 299.96 L597.32 300.73 L596.71 301.51 L596.11 302.28 L595.52 303.05 L594.93 303.82 L594.34 304.60 L593.76 305.37 L593.19 306.14 L592.62 306.92 L592.06 307.69 L591.50 308.46 L590.95 309.24 L590.40 310.01 L589.86 310.79 L589.32 311.56 L588.79 312.33 L588.26 313.11 L587.74 313.88 L587.23 314.66 L586.72 315.43 L586.21 316.20 L585.71 316.98 L585.22 317.75 L584.73 318.53 L584.25 319.30 L583.77 320.08 L583.30 320.85 L582.83 321.62 L582.37 322.40 L581.92 323.17 L581.47 323.95 L581.02 324.72 L580.58 325.49 L580.15 326.27 L579.72 327.04 L579.30 327.82 L578.88 328.59 L578.47 329.36 L578.07 330.14 L577.67 330.91 L577.27 331.69 L576.88 332.46 L576.50 333.23 L576.12 334.01 L575.75 334.78 L575.38 335.55 L575.02 336.33 L574.67 337.10 L574.32 337.87 L573.97 338.65 L573.63 339.42 L573.30 340.19 L572.97 340.96 L572.65 341.74 L572.33 342.51 L572.02 343.28 L571.72 344.05 L571.42 344.82 L571.13 345.60 L570.84 346.37 L570.55 347.14 L570.28 347.91 L570.01 348.68 L569.74 349.45 L569.48 350.22 L569.23 350.99 L568.98 351.76 L568.73 352.53 L568.50 353.30 L568.26 354.07 L568.04 354.84 L567.82 355.61 L567.60 356.38 L567.39 357.15 L567.19 357.92 L566.99 358.69 L566.79 359.45 L566.61 360.22 L566.42 360.99 L566.25 361.76 L566.08 362.52 L565.91 363.29 L565.75 364.05 L565.60 364.82 L565.45 365.59 L565.30 366.35 L565.17 367.12 L565.03 367.88 L564.91 368.65 L564.79 369.41 L564.67 370.17 L564.56 370.94 L564.46 371.70 L564.36 372.46 L564.26 373.22 L564.17 373.99 L564.09 374.75 L564.01 375.51 L563.94 376.27 L563.87 377.03 L563.81 377.79 L563.75 378.55 L563.70 379.31 L563.66 380.07 L563.62 380.82 L563.58 381.58 L563.55 382.34 L563.53 383.10 L563.51 383.85 L563.50 384.61 L563.49 385.36 L563.48 386.12 L563.48 386.87 L563.49 387.63 L563.50 388.38 L563.52 389.13 L563.54 389.89 L563.57 390.64 L563.60 391.39 L563.64 392.14 L563.68 392.89 L563.73 393.64 L563.78 394.39 L563.84 395.14 L563.90 395.88 L563.97 396.63 L564.04 397.38 L564.12 398.12 L564.20 398.87 L564.29 399.61 L564.38 400.36 L564.48 401.10 L564.58 401.84 L564.69 402.59 L564.80 403.33 L564.91 404.07 L565.03 404.81 L565.16 405.55 L565.29 406.29 L565.42 407.02 L565.56 407.76 L565.71 408.50 L565.85 409.23 L566.01 409.97 L566.16 410.70 L566.32 411.44 L566.49 412.17 L566.66 412.90 L566.84 413.63"/>
<path d="M1175.82 143.41 L1177.75 144.03 L1179.68 144.65 L1181.61 145.28 L1183.55 145.91 L1185.49 146.54 L1187.43 147.18 L1189.38 147.81 L1191.33 148.46 L1193.28 149.10 L1195.23 149.75 L1197.18 150.40 L1199.14 151.05 L1201.10 151.70 L1203.06 152.36 L1205.02 153.02 L1206.98 153.68 L1208.95 154.35 L1210.91 155.02 L1212.88 155.69 L1214.85 156.36 L1216.82 157.04 L1218.79 157.71 L1220.76 158.39 L1222.73 159.08 L1224.70 159.76 L1226.67 160.45 L1228.64 161.13 L1230.60 161.83 L1232.57 162.52 L1234.54 163.21 L1236.51 163.91 L1238.48 164.61 L1240.45 165.31 L1242.41 166.01 L1244.38 166.72 L1246.34 167.42 L1248.30 168.13 L1250.26 168.84 L1252.22 169.55 L1254.18 170.27 L1256.14 170.98 L1258.09 171.70 L1260.04 172.42 L1261.99 173.14 L1263.94 173.86 L1265.89 174.59 L1267.83 175.31 L1269.77 176.04 L1271.71 176.77 L1273.64 177.50 L1275.58 178.23 L1277.51 178.96 L1279.43 179.70 L1281.36 180.43 L1283.28 181.17 L1285.19 181.91 L1287.11 182.65 L1289.02 183.39 L1290.92 184.13 L1292.82 184.88 L1294.72 185.62 L1296.62 186.37 L1298.51 187.12 L1300.39 187.86 L1302.27 188.61 L1304.15 189.37 L1306.03 190.12 L1307.89 190.87 L1309.76 191.63 L1311.62 192.38 L1313.47 193.14 L1315.32 193.90 L1317.17 194.66 L1319.01 195.42 L1320.84 196.18 L1322.67 196.94 L1324.50 197.70 L1326.32 198.47 L1328.13 199.23 L1329.94 200.00 L1331.74 200.76 L1333.54 201.53 L1335.33 202.30 L1337.12 203.07 L1338.90 203.84 L1340.67 204.61 L1342.44 205.39 L1344.20 206.16 L1345.95 206.93 L1347.70 207.71 L1349.45 208.48 L1351.18 209.26 L1352.91 210.04 L1354.64 210.82 L1356.35 211.59 L1358.06 212.37 L1359.77 213.15 L1361.46 213.94 L1363.15 214.72 L1364.83 215.50 L1366.51 216.28 L1368.18 217.07 L1369.84 217.85 L1371.49 218.64 L1373.14 219.42 L1374.78 220.21 L1376.41 221.00 L1378.04 221.78 L1379.65 222.57 L1381.26 223.36 L1382.86 224.15 L1384.46 224.94 L1386.04 225.73 L1387.62 226.53 L1389.19 227.32 L1390.76 228.11 L1392.31 228.90 L1393.86 229.70 L1395.40 230.49 L1396.93 231.29 L1398.45 232.08 L1399.96 232.88 L1401.47 233.67 L1402.96 234.47 L1404.45 235.27 L1405.93 236.07 L1407.40 236.86 L1408.86 237.66 L1410.32 238.46 L1411.76 239.26 L1413.20 240.06 L1414.63 240.86 L1416.05 241.67 L1417.46 242.47 L1418.86 243.27 L1420.25 244.07 L1421.63 244.87 L1423.00 245.68 L1424.37 246.48 L1425.72 247.29 L1427.07 248.09 L1428.41 248.89 L1429.73 249.70 L1431.05 250.51 L1432.36 251.31 L1433.66 252.12 L1434.95 252.92 L1436.23 253.73 L1437.50 254.54 L1438.76 255.35 L1440.01 256.15 L1441.25 256.96 L1442.48 257.77 L1443.70 258.58 L1444.92 259.39 L1446.12 260.20 L1447.31 261.01 L1448.49 261.82 L1449.66 262.63 L1450.83 263.44 L1451.98 264.25 L1453.12 265.06 L1454.25 265.87 L1455.37 266.69 L1456.48 267.50 L1457.58 268.31 L1458.67 269.12 L1459.75 269.94 L1460.82 270.75 L1461.88 271.56 L1462.93 272.38 L1463.97 273.19 L1465.00 274.00 L1466.02 274.82 L1467.02 275.63 L1468.02 276.45 L1469.00 277.26 L1469.98 278.08 L1470.94 278.89 L1471.90 279.71 L1472.84 280.52 L1473.77 281.34 L1474.69 282.15 L1475.60 282.97 L1476.50 283.79"/>
<path d="M326.81 284.60 L326.72 285.42 L326.64 286.24 L326.58 287.05 L326.52 287.87 L326.47 288.69 L326.44 289.51 L326.41 290.32 L326.40 291.14 L326.40 291.96 L326.41 292.78 L326.43 293.59 L326.46 294.41 L326.50 295.23 L326.55 296.05 L326.61 296.87 L326.69 297.69 L326.77 298.51 L326.87 299.32 L326.98 300.14 L327.10 300.96 L327.23 301.78 L327.37 302.60 L327.52 303.42 L327.68 304.24 L327.85 305.06 L328.04 305.88 L328.24 306.70 L328.44 307.52 L328.66 308.34 L328.89 309.16 L329.13 309.98 L329.38 310.80 L329.64 311.61 L329.91 312.43 L330.20 313.25 L330.49 314.07 L330.80 314.89 L331.12 315.71 L331.45 316.53 L331.78 317.35 L332.13 318.17 L332.50 318.99 L332.87 319.81 L333.25 320.63 L333.64 321.45 L334.05 322.27 L334.46 323.09 L334.89 323.91 L335.33 324.73 L335.78 325.55 L336.24 326.37 L336.71 327.19 L337.19 328.01 L337.68 328.83 L338.18 329.65 L338.70 330.47 L339.22 331.29 L339.76 332.11 L340.31 332.93 L340.86 333.75 L341.43 334.57 L342.01 335.39 L342.60 336.21 L343.20 337.03 L343.81 337.85 L344.43 338.67 L345.06 339.49 L345.71 340.31 L346.36 341.13 L347.03 341.94 L347.70 342.76 L348.39 343.58 L349.08 344.40 L349.79 345.22 L350.51 346.04 L351.23 346.86 L351.97 347.67 L352.72 348.49 L353.48 349.31 L354.25 350.13 L355.03 350.94 L355.82 351.76 L356.62 352.58 L357.44 353.40 L358.26 354.21 L359.09 355.03 L359.93 355.85 L360.78 356.66 L361.65 357.48 L362.52 358.30 L363.40 359.11 L364.30 359.93 L365.20 360.74 L366.12 361.56 L367.04 362.38 L367.97 363.19 L368.92 364.01 L369.87 364.82 L370.84 365.63 L371.81 366.45 L372.79 367.26 L373.79 368.08 L374.79 368.89 L375.81 369.70 L376.83 370.52 L377.86 371.33 L378.90 372.14 L379.96 372.96 L381.02 373.77 L382.09 374.58 L383.17 375.39 L384.26 376.20 L385.36 377.01 L386.47 377.83 L387.59 378.64 L388.72 379.45 L389.86 380.26 L391.01 381.07 L392.17 381.88 L393.33 382.69 L394.51 383.49 L395.69 384.30 L396.89 385.11 L398.09 385.92 L399.30 386.73 L400.52 387.53 L401.75 388.34 L402.99 389.15 L404.24 389.95 L405.50 390.76 L406.76 391.56 L408.04 392.37 L409.32 393.17 L410.61 393.98 L411.92 394.78 L413.23 395.59 L414.54 396.39 L415.87 397.19 L417.21 397.99 L418.55 398.80 L419.90 399.60 L421.26 400.40 L422.63 401.20 L424.01 402.00 L425.39 402.80 L426.79 403.60 L428.19 404.40 L429.60 405.20 L431.01 405.99 L432.44 406.79 L433.87 407.59 L435.32 408.38 L436.76 409.18 L438.22 409.97 L439.69 410.77 L441.16 411.56 L442.64 412.36 L444.13 413.15 L445.62 413.94 L447.12 414.73 L448.63 415.53 L450.15 416.32 L451.68 417.11 L453.21 417.90 L454.75 418.69 L456.29 419.47 L457.85 420.26 L459.41 421.05 L460.97 421.84 L462.55 422.62 L464.13 423.41 L465.72 424.19 L467.31 424.97 L468.91 425.76 L470.52 426.54 L472.13 427.32 L473.75 428.10 L475.38 428.88 L477.01 429.66 L478.65 430.44 L480.30 431.22 L481.95 432.00 L483.61 432.77 L485.27 433.55 L486.94 434.32 L488.61 435.10 L490.29 435.87 L491.98 436.64 L493.67 437.41 L495.37 438.18 L497.08 438.95 L498.78 439.72 L500.50 440.49 L502.22 441.25 L503.94 442.02 L505.67 442.78 L507.41 443.55 L509.15 444.31 L510.89 445.07 L512.64 445.83 L514.39 446.59"/>
<path d="M1149.83 142.43 L1149.63 141.92 L1149.43 141.42 L1149.23 140.92 L1149.04 140.42 L1148.86 139.93 L1148.69 139.44 L1148.52 138.95 L1148.36 138.48 L1148.21 138.00 L1148.06 137.53 L1147.93 137.07 L1147.80 136.61 L1147.68 136.15 L1147.57 135.70 L1147.46 135.26 L1147.37 134.82 L1147.28 134.38 L1147.21 133.95 L1147.14 133.53 L1147.09 133.11 L1147.04 132.70 L1147.00 132.29 L1146.98 131.89 L1146.96 131.49 L1146.96 131.10 L1146.97 130.72 L1146.99 130.34 L1147.02 129.96 L1147.06 129.60 L1147.11 129.23 L1147.18 128.88 L1147.26 128.53 L1147.35 128.19 L1147.45 127.85 L1147.57 127.52 L1147.70 127.20 L1147.85 126.88 L1148.00 126.57 L1148.18 126.27 L1148.36 125.97 L1148.57 125.68 L1148.78 125.40 L1149.01 125.12 L1149.26 124.85 L1149.52 124.59 L1149.80 124.33 L1150.09 124.08 L1150.40 123.84 L1150.73 123.60 L1151.07 123.38 L1151.43 123.16 L1151.81 122.94 L1152.20 122.74 L1152.61 122.54 L1153.04 122.35 L1153.49 122.17 L1153.96 121.99 L1154.44 121.83 L1154.94 121.67 L1155.46 121.51 L1156.00 121.37 L1156.56 121.23 L1157.14 121.10 L1157.73 120.98 L1158.35 120.87 L1158.99 120.76 L1159.64 120.67 L1160.32 120.58 L1161.01 120.50 L1161.73 120.42 L1162.47 120.36 L1163.22 120.30 L1164.00 120.25 L1164.80 120.21 L1165.62 120.18 L1166.46 120.15 L1167.32 120.13 L1168.20 120.13 L1169.11 120.12 L1170.03 120.13 L1170.98 120.15 L1171.95 120.17 L1172.93 120.20 L1173.95 120.24 L1174.98 120.29 L1176.03 120.35 L1177.11 120.41 L1178.20 120.48 L1179.32 120.56 L1180.46 120.65 L1181.62 120.74 L1182.81 120.85 L1184.01 120.96"/>
<path d="M620.04 121.08 L620.59 121.21 L621.12 121.34 L621.62 121.49 L622.11 121.64 L622.57 121.79 L623.02 121.96 L623.44 122.13 L623.84 122.32 L624.23 122.50 L624.59 122.70 L624.94 122.90 L625.26 123.12 L625.57 123.33 L625.86 123.56 L626.12 123.79 L626.38 124.03 L626.61 124.28 L626.82 124.54 L627.02 124.80 L627.20 125.07 L627.37 125.34 L627.51 125.62 L627.64 125.91 L627.76 126.21 L627.86 126.51 L627.94 126.82 L628.00 127.14 L628.06 127.46 L628.09 127.79 L628.11 128.12 L628.12 128.47 L628.11 128.81 L628.09 129.17 L628.06 129.53 L628.01 129.89 L627.95 130.26 L627.87 130.64 L627.79 131.03 L627.69 131.42 L627.57 131.81 L627.45 132.21 L627.31 132.62 L627.17 133.03 L627.01 133.45 L626.84 133.87 L626.66 134.30 L626.47 134.73 L626.26 135.17 L626.05 135.62 L625.83 136.07 L625.60 136.52 L625.36 136.98 L625.11 137.44 L624.85 137.91 L624.59 138.38 L624.31 138.86 L624.03 139.35 L623.73 139.83 L623.43 140.33 L623.13 140.82 L622.81 141.32 L622.49 141.83 L622.16 142.34 L621.82 142.85 L621.48 143.37 L621.13 143.89 L620.78 144.42 L620.41 144.95 L620.05 145.48 L619.67 146.02 L619.30 146.56 L618.91 147.11 L618.52 147.66 L618.13 148.21 L617.73 148.76 L617.33 149.32 L616.92 149.89 L616.51 150.46 L616.09 151.03 L615.67 151.60 L615.25 152.18 L614.82 152.76 L614.39 153.34 L613.95 153.93 L613.52 154.52 L613.08 155.11 L612.63 155.71 L612.19 156.31 L611.74 156.91 L611.29 157.52 L610.83 158.13 L610.38 158.74 L609.92 159.35 L609.46 159.97 L609.00 160.59 L608.53 161.21 L608.07 161.83 L607.60 162.46 L607.14 163.09 L606.67 163.72 L606.20 164.36 L605.73 165.00 L605.26 165.64 L604.79 166.28 L604.31 166.92 L603.84 167.57 L603.37 168.22 L602.90 168.87 L602.42 169.53 L601.95 170.18 L601.48 170.84 L601.00 171.50 L600.53 172.16 L600.06 172.83 L599.58 173.49 L599.11 174.16 L598.64 174.83 L598.17 175.51 L597.70 176.18 L597.24 176.86 L596.77 177.54 L596.30 178.22 L595.84 178.90 L595.37 179.58 L594.91 180.27 L594.45 180.95 L593.99 181.64 L593.54 182.33 L593.08 183.03 L592.63 183.72 L592.17 184.42 L591.72 185.11 L591.27 185.81 L590.83 186.51 L590.38 187.22 L589.94 187.92 L589.50 188.62 L589.07 189.33 L588.63 190.04 L588.20 190.75 L587.77 191.46 L587.34 192.17 L586.92 192.89 L586.50 193.60 L586.08 194.32 L585.66 195.03 L585.25 195.75 L584.84 196.47 L584.43 197.20 L584.03 197.92 L583.63 198.64 L583.23 199.37 L582.83 200.09 L582.44 200.82 L582.06 201.55 L581.67 202.28 L581.29 203.01 L580.91 203.74 L580.54 204.48 L580.17 205.21 L579.80 205.95 L579.44 206.68 L579.08 207.42 L578.73 208.16 L578.38 208.90 L578.03 209.64 L577.68 210.38 L577.35 211.12 L577.01 211.87 L576.68 212.61 L576.35 213.36 L576.03 214.10 L575.71 214.85 L575.40 215.60 L575.09 216.35 L574.78 217.10 L574.48 217.85 L574.18 218.60 L573.89 219.35 L573.60 220.11 L573.32 220.86 L573.04 221.62 L572.76 222.37 L572.49 223.13 L572.23 223.88 L571.96 224.64 L571.71 225.40 L571.46 226.16 L571.21 226.92 L570.97 227.68 L570.73 228.44 L570.50 229.21 L570.27 229.97 L570.05 230.73 L569.83 231.50 L569.62 232.26 L569.41 233.03 L569.21 233.79 L569.01 234.56 L568.82 235.33 L568.63 236.10 L568.45 236.86 L568.27 237.63 L568.10 238.40 L567.93 239.17 L567.77 239.95 L567.62 240.72 L567.47 241.49 L567.32 242.26 L567.18 243.04 L567.04 243.81 L566.92 244.58 L566.79 245.36 L566.67 246.13 L566.56 246.91 L566.45 247.69 L566.35 248.46 L566.25 249.24 L566.16 250.02 L566.07 250.80 L565.99 251.57 L565.92 252.35 L565.85 253.13 L565.78 253.91 L565.72 254.69 L565.67 255.47 L565.62 256.25 L565.58 257.04 L565.55 257.82 L565.52 258.60 L565.49 259.38 L565.47 260.17 L565.46 260.95 L565.45 261.73 L565.45 262.52 L565.45 263.30 L565.46 264.09 L565.48 264.87 L565.50 265.66 L565.53 266.44 L565.56 267.23 L565.60 268.02 L565.64 268.80 L565.69 269.59 L565.75 270.38 L565.81 271.17 L565.88 271.96 L565.95 272.74 L566.03 273.53 L566.11 274.32 L566.21 275.11 L566.30 275.90 L566.40 276.69 L566.51 277.48 L566.63 278.27 L566.75 279.06 L566.87 279.85 L567.01 280.64 L567.15 281.43 L567.29 282.23 L567.44 283.02 L567.60 283.81 L567.76 284.60 L567.93 285.39 L568.10 286.19 L568.28 286.98 L568.46 287.77 L568.66 288.56 L568.85 289.36 L569.06 290.15 L569.27 290.94 L569.48 291.74 L569.70 292.53 L569.93 293.33 L570.17 294.12 L570.40 294.92 L570.65 295.71 L570.90 296.50 L571.16 297.30 L571.42 298.09 L571.69 298.89 L571.97 299.68 L572.25 300.48 L572.53 301.27 L572.83 302.07 L573.13 302.87 L573.43 303.66 L573.74 304.46 L574.06 305.25 L574.38 306.05 L574.71 306.84 L575.04 307.64 L575.39 308.44 L575.73 309.23 L576.08 310.03 L576.44 310.83 L576.81 311.62 L577.18 312.42 L577.55 313.21 L577.93 314.01 L578.32 314.81 L578.72 315.60 L579.12 316.40 L579.52 317.20 L579.93 317.99 L580.35 318.79 L580.77 319.59 L581.20 320.38 L581.64 321.18 L582.08 321.98 L582.52 322.77 L582.98 323.57 L583.43 324.37 L583.90 325.16 L584.37 325.96 L584.84 326.76 L585.32 327.55 L585.81 328.35 L586.30 329.15 L586.80 329.94 L587.31 330.74 L587.81 331.54 L588.33 332.33 L588.85 333.13 L589.38 333.92 L589.91 334.72 L590.45 335.52 L590.99 336.31 L591.54 337.11 L592.10 337.90 L592.66 338.70 L593.22 339.49 L593.80 340.29 L594.37 341.09 L594.96 341.88 L595.55 342.68 L596.14 343.47 L596.74 344.26 L597.34 345.06 L597.95 345.85 L598.57 346.65 L599.19 347.44 L599.82 348.24 L600.45 349.03 L601.09 349.82 L601.73 350.62 L602.38 351.41 L603.03 352.20 L603.69 353.00 L604.36 353.79 L605.03 354.58 L605.70 355.38 L606.38 356.17 L607.07 356.96 L607.76 357.75 L608.46 358.54"/>
<path d="M1155.80 163.46 L1156.58 163.37 L1157.36 163.30 L1158.15 163.22 L1158.95 163.15 L1159.75 163.09 L1160.57 163.03 L1161.39 162.98 L1162.21 162.93 L1163.05 162.88 L1163.89 162.84 L1164.74 162.81 L1165.60 162.78 L1166.47 162.76 L1167.35 162.74 L1168.23 162.72 L1169.12 162.71 L1170.02 162.71 L1170.92 162.71 L1171.84 162.72 L1172.76 162.73 L1173.69 162.74 L1174.63 162.76 L1175.58 162.79 L1176.53 162.82 L1177.50 162.85 L1178.47 162.89 L1179.45 162.94 L1180.44 162.99 L1181.43 163.04 L1182.44 163.10 L1183.45 163.17 L1184.47 163.24 L1185.50 163.31 L1186.54 163.39 L1187.58 163.48 L1188.64 163.57 L1189.70 163.66 L1190.77 163.76 L1191.85 163.86 L1192.93 163.97 L1194.03 164.08 L1195.13 164.20 L1196.24 164.33 L1197.36 164.45 L1198.49 164.59 L1199.63 164.72 L1200.77 164.87 L1201.92 165.01 L1203.09 165.16 L1204.25 165.32 L1205.43 165.48 L1206.62 165.65 L1207.81 165.82 L1209.01 165.99 L1210.22 166.17 L1211.43 166.35 L1212.66 166.54 L1213.89 166.74 L1215.13 166.93 L1216.38 167.14 L1217.64 167.34 L1218.90 167.55 L1220.17 167.77 L1221.45 167.99 L1222.74 168.21 L1224.03 168.44 L1225.33 168.68 L1226.64 168.91 L1227.95 169.15 L1229.28 169.40 L1230.61 169.65 L1231.95 169.91 L1233.29 170.16 L1234.64 170.43 L1236.00 170.69 L1237.37 170.97 L1238.74 171.24 L1240.12 171.52 L1241.51 171.80 L1242.90 172.09 L1244.30 172.38 L1245.71 172.68 L1247.12 172.98 L1248.54 173.28 L1249.97 173.59 L1251.40 173.90 L1252.84 174.22 L1254.28 174.54 L1255.73 174.86 L1257.19 175.19 L1258.65 175.52 L1260.12 175.85 L1261.60 176.19 L1263.08 176.53 L1264.56 176.88 L1266.05 177.23 L1267.55 177.58 L1269.05 177.93 L1270.56 178.29 L1272.07 178.66 L1273.59 179.02 L1275.12 179.39 L1276.64 179.77 L1278.18 180.14 L1279.72 180.53 L1281.26 180.91 L1282.81 181.30 L1284.36 181.69 L1285.92 182.08 L1287.48 182.48 L1289.04 182.88 L1290.61 183.28 L1292.18 183.69 L1293.76 184.10 L1295.34 184.51 L1296.93 184.93 L1298.52 185.35 L1300.11 185.77 L1301.71 186.19 L1303.31 186.62 L1304.91 187.05 L1306.52 187.49 L1308.13 187.92 L1309.74 188.36 L1311.36 188.81 L1312.98 189.25 L1314.60 189.70 L1316.23 190.15 L1317.86 190.61 L1319.49 191.06 L1321.12 191.52 L1322.76 191.99 L1324.39 192.45 L1326.03 192.92 L1327.68 193.39 L1329.32 193.86 L1330.97 194.34 L1332.62 194.82 L1334.27 195.30 L1335.92 195.78 L1337.57 196.26 L1339.23 196.75 L1340.88 197.24 L1342.54 197.74 L1344.20 198.23 L1345.86 198.73 L1347.52 199.23 L1349.19 199.73 L1350.85 200.23 L1352.51 200.74 L1354.18 201.25 L1355.84 201.76 L1357.51 202.27 L1359.18 202.79 L1360.84 203.31 L1362.51 203.83 L1364.18 204.35 L1365.85 204.87 L1367.51 205.40 L1369.18 205.93 L1370.85 206.46 L1372.52 206.99 L1374.18 207.53 L1375.85 208.06 L1377.52 208.60 L1379.18 209.14 L1380.85 209.68 L1382.51 210.23 L1384.17 210.77 L1385.83 211.32 L1387.50 211.87 L1389.16 212.42 L1390.81 212.98 L1392.47 213.53 L1394.13 214.09 L1395.78 214.65"/>
<path d="M406.63 215.21 L406.41 215.77 L406.18 216.33 L405.95 216.90 L405.73 217.47 L405.51 218.04 L405.29 218.61 L405.07 219.18 L404.85 219.75 L404.64 220.33 L404.43 220.90 L404.22 221.48 L404.02 222.06 L403.81 222.64 L403.61 223.23 L403.41 223.81 L403.22 224.40 L403.02 224.98 L402.83 225.57 L402.64 226.16 L402.46 226.75 L402.28 227.35 L402.10 227.94 L401.92 228.54 L401.75 229.13 L401.58 229.73 L401.42 230.33 L401.25 230.93 L401.09 231.53 L400.94 232.14 L400.79 232.74 L400.64 233.35 L400.49 233.96 L400.35 234.56 L400.21 235.17 L400.08 235.78 L399.95 236.40 L399.82 237.01 L399.70 237.62 L399.58 238.24 L399.47 238.86 L399.36 239.47 L399.25 240.09 L399.15 240.71 L399.05 241.33 L398.96 241.95 L398.87 242.58 L398.79 243.20 L398.71 243.83 L398.63 244.45 L398.56 245.08 L398.50 245.71 L398.43 246.34 L398.38 246.97 L398.32 247.60 L398.28 248.23 L398.23 248.86 L398.20 249.49 L398.16 250.13 L398.13 250.76 L398.11 251.40 L398.09 252.04 L398.08 252.68 L398.07 253.31 L398.07 253.95 L398.07 254.60 L398.07 255.24 L398.09 255.88 L398.10 256.52 L398.12 257.16 L398.15 257.81 L398.18 258.45 L398.22 259.10 L398.27 259.75 L398.31 260.39 L398.37 261.04 L398.43 261.69 L398.49 262.34 L398.56 262.99 L398.64 263.64 L398.72 264.29 L398.81 264.95 L398.90 265.60 L399.00 266.25 L399.11 266.91 L399.21 267.56 L399.33 268.22 L399.45 268.87 L399.58 269.53 L399.71 270.19 L399.85 270.84 L399.99 271.50 L400.14 272.16 L400.30 272.82 L400.46 273.48 L400.63 274.14 L400.80 274.80 L400.98 275.46 L401.17 276.13 L401.36 276.79 L401.56 277.45 L401.76 278.11 L401.97 278.78 L402.19 279.44 L402.41 280.11 L402.64 280.77 L402.87 281.44 L403.11 282.11 L403.36 282.77 L403.61 283.44 L403.87 284.11 L404.13 284.77 L404.40 285.44 L404.68 286.11 L404.96 286.78 L405.25 287.45 L405.55 288.12 L405.85 288.79 L406.16 289.46 L406.47 290.13 L406.79 290.80 L407.12 291.47 L407.45 292.14 L407.79 292.82 L408.14 293.49 L408.49 294.16 L408.85 294.83 L409.21 295.51 L409.58 296.18 L409.96 296.85 L410.34 297.53 L410.73 298.20 L411.13 298.88 L411.53 299.55 L411.94 300.23 L412.36 300.90 L412.78 301.58 L413.21 302.25 L413.64 302.93 L414.08 303.60 L414.53 304.28 L414.98 304.96 L415.44 305.63 L415.90 306.31 L416.38 306.99 L416.86 307.66 L417.34 308.34 L417.83 309.02 L418.33 309.69 L418.83 310.37 L419.34 311.05 L419.86 311.73 L420.38 312.40 L420.91 313.08 L421.45 313.76 L421.99 314.44 L422.54 315.11 L423.09 315.79 L423.65 316.47 L424.22 317.15 L424.79 317.83 L425.37 318.50 L425.96 319.18 L426.55 319.86 L427.15 320.54 L427.75 321.22 L428.37 321.89 L428.98 322.57 L429.61 323.25 L430.24 323.93 L430.87 324.61 L431.51 325.29 L432.16 325.96 L432.82 326.64 L433.48 327.32 L434.14 328.00 L434.82 328.67 L435.50 329.35 L436.18 330.03 L436.87 330.71 L437.57 331.38 L438.27 332.06 L438.98 332.74 L439.70 333.42 L440.42 334.09 L441.15 334.77 L441.88 335.45 L442.62 336.12 L443.37 336.80 L444.12 337.47 L444.88 338.15 L445.64 338.83 L446.41 339.50 L447.19 340.18 L447.97 340.85 L448.76 341.53 L449.55 342.20 L450.35 342.87 L451.15 343.55 L451.96 344.22 L452.78 344.90 L453.60 345.57 L454.43 346.24 L455.26 346.92 L456.10 347.59 L456.95 348.26 L457.80 348.93 L458.65 349.60 L459.52 350.28 L460.38 350.95 L461.26 351.62 L462.14 352.29 L463.02 352.96 L463.91 353.63 L464.80 354.30 L465.70 354.97 L466.61 355.63 L467.52 356.30 L468.44 356.97 L469.36 357.64 L470.29 358.30 L471.22 358.97 L472.16 359.64 L473.10 360.30 L474.05 360.97 L475.00 361.63 L475.96 362.30 L476.93 362.96 L477.90 363.62 L478.87 364.29 L479.85 364.95 L480.83 365.61 L481.82 366.27 L482.82 366.93 L483.82 367.59 L484.82 368.25 L485.83 368.91 L486.84 369.57 L487.86 370.23 L488.89 370.89 L489.91 371.55 L490.95 372.20 L491.99 372.86 L493.03 373.51 L494.07 374.17 L495.13 374.82 L496.18 375.48 L497.24 376.13 L498.31 376.78 L499.38 377.43 L500.45 378.08 L501.53 378.73 L502.61 379.38 L503.70 380.03 L504.79 380.68 L505.89 381.33 L506.99 381.97 L508.09 382.62 L509.20 383.26 L510.31 383.91 L511.43 384.55 L512.55 385.19 L513.68 385.84 L514.80 386.48 L515.94 387.12 L517.07 387.76 L518.21 388.40 L519.36 389.03 L520.51 389.67 L521.66 390.31 L522.81 390.94 L523.97 391.58 L525.13 392.21 L526.30 392.84 L527.47 393.48 L528.64 394.11 L529.82 394.74 L531.00 395.36 L532.18 395.99 L533.37 396.62 L534.56 397.24 L535.75 397.87 L536.95 398.49 L538.15 399.12 L539.35 399.74 L540.56 400.36 L541.77 400.98 L542.98 401.60 L544.20 402.21 L545.41 402.83 L546.64 403.45 L547.86 404.06 L549.09 404.67 L550.31 405.29 L551.55 405.90 L552.78 406.51 L554.02 407.11 L555.26 407.72 L556.50 408.33 L557.74 408.93 L558.99 409.53 L560.24 410.14 L561.49 410.74 L562.75 411.34 L564.00 411.93 L565.26 412.53 L566.52 413.13 L567.78 413.72 L569.05 414.31 L570.32 414.91 L571.58 415.49 L572.86 416.08 L574.13 416.67 L575.40 417.26 L576.68 417.84 L577.95 418.42 L579.23 419.00 L580.51 419.58 L581.80 420.16 L583.08 420.74 L584.37 421.31 L585.65 421.89 L586.94 422.46 L588.23 423.03 L589.52 423.60 L590.81 424.17 L592.11 424.73 L593.40 425.29"/>
<path d="M825.54 56.97 L823.07 57.78 L820.59 58.59 L818.10 59.41 L815.60 60.23 L813.09 61.06 L810.58 61.89 L808.05 62.73 L805.52 63.56 L802.98 64.40 L800.44 65.25 L797.89 66.10 L795.33 66.94 L792.77 67.80 L790.21 68.65 L787.65 69.51 L785.08 70.37 L782.51 71.23 L779.93 72.09 L777.36 72.95 L774.78 73.82 L772.20 74.68 L769.62 75.55 L767.04 76.42 L764.46 77.29 L761.88 78.16 L759.30 79.04 L756.72 79.91 L754.14 80.79 L751.56 81.66 L748.98 82.54 L746.40 83.42 L743.83 84.30 L741.25 85.18 L738.68 86.06 L736.10 86.94 L733.53 87.82 L730.96 88.70 L728.40 89.59 L725.83 90.47 L723.27 91.36 L720.71 92.24 L718.15 93.13 L715.60 94.02 L713.05 94.90 L710.50 95.79 L707.95 96.68 L705.41 97.57 L702.87 98.45 L700.34 99.34 L697.80 100.23 L695.28 101.12 L692.75 102.01 L690.23 102.91 L687.71 103.80 L685.20 104.69 L682.69 105.58 L680.18 106.47 L677.68 107.36 L675.19 108.26 L672.69 109.15 L670.21 110.04 L667.72 110.94 L665.25 111.83 L662.77 112.73 L660.30 113.62 L657.84 114.51 L655.38 115.41 L652.93 116.30 L650.48 117.20 L648.04 118.09 L645.60 118.99 L643.16 119.89 L640.74 120.78 L638.32 121.68 L635.90 122.58 L633.49 123.47 L631.08 124.37 L628.69 125.27 L626.29 126.16 L623.91 127.06 L621.53 127.96 L619.15 128.86 L616.78 129.75 L614.42 130.65 L612.06 131.55 L609.71 132.45 L607.37 133.35 L605.03 134.24 L602.70 135.14 L600.38 136.04 L598.06 136.94 L595.75 137.84 L593.45 138.74 L591.15 139.64 L588.86 140.54 L586.58 141.44 L584.31 142.33 L582.04 143.23 L579.78 144.13 L577.52 145.03 L575.28 145.93 L573.04 146.83 L570.81 147.73 L568.58 148.63 L566.37 149.53 L564.16 150.43 L561.96 151.33 L559.76 152.23 L557.58 153.14 L555.40 154.04 L553.23 154.94 L551.07 155.84 L548.91 156.74 L546.76 157.64 L544.63 158.54 L542.50 159.44 L540.37 160.34 L538.26 161.24 L536.16 162.14 L534.06 163.05 L531.97 163.95 L529.89 164.85 L527.82 165.75 L525.76 166.65 L523.70 167.55 L521.66 168.45 L519.62 169.36 L517.59 170.26 L515.57 171.16 L513.56 172.06 L511.56 172.96 L509.57 173.86 L507.59 174.77 L505.61 175.67 L503.65 176.57 L501.69 177.47 L499.75 178.37 L497.81 179.28 L495.88 180.18 L493.96 181.08 L492.06 181.98 L490.16 182.89 L488.27 183.79 L486.39 184.69 L484.52 185.59 L482.65 186.50 L480.80 187.40 L478.96 188.30 L477.13 189.20 L475.31 190.11 L473.50 191.01 L471.69 191.91 L469.90 192.81 L468.12 193.72 L466.35 194.62 L464.59 195.52 L462.84 196.43 L461.09 197.33 L459.36 198.23 L457.64 199.13 L455.93 200.04 L454.23 200.94 L452.54 201.84 L450.86 202.75 L449.19 203.65 L447.54 204.55 L445.89 205.46 L444.25 206.36 L442.62 207.26 L441.01 208.17 L439.40 209.07 L437.81 209.97 L436.23 210.87 L434.65 211.78 L433.09 212.68 L431.54 213.58 L430.00 214.49 L428.47 215.39 L426.96 216.29 L425.45 217.20 L423.95 218.10 L422.47 219.01 L421.00 219.91 L419.53 220.81 L418.08 221.72 L416.64 222.62 L415.22 223.52 L413.80 224.43 L412.39 225.33 L411.00 226.23 L409.62 227.14 L408.25 228.04 L406.89 228.94 L405.54 229.85 L404.20 230.75 L402.88 231.66 L401.57 232.56 L400.27 233.46 L398.98 234.37 L397.70 235.27 L396.43 236.17 L395.18 237.08 L393.94 237.98 L392.71 238.89 L391.49 239.79 L390.28 240.69 L389.09 241.60 L387.90 242.50 L386.73 243.41 L385.58 244.31 L384.43 245.21 L383.29 246.12 L382.17 247.02 L381.06 247.92 L379.96 248.83 L378.88 249.73 L377.81 250.64 L376.74 251.54 L375.70 252.44 L374.66 253.35 L373.64 254.25 L372.62 255.16 L371.62 256.06 L370.64 256.97 L369.66 257.87 L368.70 258.77 L367.75 259.68 L366.81 260.58 L365.89 261.49 L364.98 262.39 L364.08 263.29 L363.19 264.20 L362.32 265.10 L361.46 266.01 L360.61 266.91 L359.77 267.81 L358.95 268.72 L358.14 269.62 L357.34 270.53 L356.55 271.43 L355.78 272.34 L355.02 273.24 L354.27 274.14 L353.54 275.05 L352.82 275.95 L352.11 276.86 L351.42 277.76 L350.73 278.66 L350.06 279.57 L349.41 280.47 L348.76 281.38 L348.13 282.28 L347.51 283.19 L346.91 284.09 L346.32 284.99 L345.74 285.90 L345.17 286.80 L344.62 287.71 L344.08 288.61 L343.55 289.52 L343.04 290.42 L342.54 291.32 L342.05 292.23 L341.58 293.13 L341.12 294.04 L340.67 294.94 L340.23 295.85 L339.81 296.75 L339.40 297.66 L339.01 298.56 L338.63 299.46 L338.26 300.37 L337.90 301.27 L337.56 302.18 L337.23 303.08 L336.92 303.99 L336.61 304.89 L336.32 305.79 L336.05 306.70 L335.78 307.60 L335.54 308.51 L335.30 309.41 L335.08 310.32 L334.87 311.22 L334.67 312.12 L334.49 313.03 L334.32 313.93 L334.16 314.84 L334.02 315.74 L333.89 316.65 L333.77 317.55 L333.67 318.46 L333.58 319.36 L333.50 320.26 L333.44 321.17 L333.39 322.07 L333.35 322.98 L333.33 323.88 L333.32 324.79 L333.32 325.69 L333.34 326.59 L333.37 327.50 L333.41 328.40 L333.47 329.31 L333.54 330.21 L333.62 331.12 L333.72 332.02 L333.83 332.93 L333.95 333.83 L334.09 334.73 L334.24 335.64 L334.40 336.54 L334.58 337.45 L334.77 338.35 L334.97 339.26 L335.19 340.16 L335.42 341.06 L335.66 341.97 L335.92 342.87 L336.19 343.78 L336.47 344.68 L336.76 345.59 L337.07 346.49 L337.40 347.39 L337.73 348.30 L338.08 349.20 L338.44 350.11 L338.82 351.01 L339.21 351.92 L339.61 352.82 L340.02 353.72 L340.45 354.63 L340.89 355.53 L341.35 356.44 L341.82 357.34 L342.30 358.25 L342.79 359.15 L343.30 360.05 L343.82 360.96 L344.35 361.86 L344.90 362.77 L345.46 363.67 L346.03 364.58 L346.61 365.48 L347.21 366.38 L347.82 367.29 L348.45 368.19 L349.08 369.10 L349.73 370.00 L350.40 370.91 L351.07 371.81 L351.76 372.71 L352.46 373.62 L353.18 374.52 L353.91 375.43 L354.65 376.33 L355.40 377.23 L356.17 378.14 L356.95 379.04 L357.74 379.95 L358.54 380.85 L359.36 381.75 L360.19 382.66 L361.03 383.56 L361.89 384.47 L362.75 385.37 L363.63 386.28 L364.53 387.18 L365.43 388.08 L366.35 388.99 L367.28 389.89 L368.22 390.80 L369.18 391.70 L370.15 392.60 L371.13 393.51 L372.12 394.41 L373.13 395.32 L374.14 396.22 L375.17 397.12 L376.22 398.03 L377.27 398.93 L378.34 399.83 L379.42 400.74 L380.51 401.64 L381.61 402.55 L382.73 403.45 L383.86 404.35 L385.00 405.26 L386.15 406.16 L387.31 407.07 L388.49 407.97 L389.68 408.87 L390.88 409.78 L392.09 410.68 L393.31 411.58 L394.55 412.49 L395.80 413.39 L397.06 414.29 L398.33 415.20 L399.61 416.10 L400.91 417.01 L402.21 417.91 L403.53 418.81 L404.86 419.72 L406.20 420.62 L407.56 421.52 L408.92 422.43 L410.30 423.33 L411.69 424.23 L413.08 425.14 L414.49 426.04 L415.92 426.94 L417.35 427.85 L418.79 428.75 L420.25 429.65 L421.72 430.56 L423.19 431.46 L424.68 432.36 L426.18 433.27 L427.70 434.17 L429.22 435.07 L430.75 435.98 L432.30 436.88 L433.85 437.78 L435.42 438.69 L437.00 439.59 L438.58 440.49 L440.18 441.39 L441.79 442.30 L443.41 443.20 L445.04 444.10 L446.68 445.01 L448.34 445.91 L450.00 446.81 L451.67 447.71"/>
</g>
<path d="M495.80 175.60 L497.44 174.87 L499.09 174.15 L500.74 173.42 L502.40 172.69 L504.06 171.96 L505.73 171.24 L507.41 170.51 L509.09 169.78 L510.78 169.06 L512.47 168.33 L514.17 167.60 L515.88 166.88 L517.59 166.15 L519.31 165.42 L521.03 164.70 L522.76 163.97 L524.49 163.24 L526.23 162.52 L527.98 161.79 L529.73 161.07 L531.48 160.34 L533.25 159.61 L535.01 158.89 L536.79 158.16 L538.56 157.43 L540.35 156.71 L542.14 155.98 L543.93 155.26 L545.73 154.53 L547.53 153.81 L549.34 153.08 L551.16 152.35 L552.98 151.63 L554.80 150.90 L556.63 150.18 L558.47 149.45 L560.31 148.73 L562.15 148.00 L564.00 147.28 L565.86 146.55 L567.72 145.83 L569.58 145.10 L571.45 144.38 L573.33 143.65 L575.20 142.93 L577.09 142.20 L578.98 141.48 L580.87 140.75 L582.77 140.03 L584.67 139.31 L586.58 138.58 L588.49 137.86 L590.40 137.13 L592.32 136.41 L594.25 135.69 L596.18 134.96 L598.11 134.24 L600.05 133.52 L601.99 132.79 L603.93 132.07 L605.88 131.35 L607.84 130.62 L609.80 129.90 L611.76 129.18 L613.73 128.46 L615.70 127.73 L617.67 127.01 L619.65 126.29 L621.63 125.57 L623.62 124.85 L625.61 124.12 L627.60 123.40 L629.60 122.68 L631.60 121.96 L633.60 121.24 L635.61 120.52 L637.62 119.80 L639.64 119.08 L641.66 118.36 L643.68 117.64 L645.70 116.91 L647.73 116.19 L649.77 115.48 L651.80 114.76 L653.84 114.04 L655.88 113.32 L657.93 112.60 L659.97 111.88 L662.02 111.16 L664.08 110.44 L666.13 109.72 L668.19 109.01 L670.26 108.29 L672.32 107.57 L674.39 106.85 L676.46 106.14 L678.53 105.42 L680.61 104.70 L682.69 103.99 L684.77 103.27 L686.85 102.56 L688.94 101.84 L691.02 101.13 L693.11 100.41 L695.20 99.70 L697.30 98.99 L699.39 98.27 L701.49 97.56 L703.59 96.85 L705.69 96.13 L707.80 95.42 L709.90 94.71 L712.01 94.00 L714.12 93.29 L716.23 92.58 L718.34 91.87 L720.45 91.16 L722.56 90.45 L724.68 89.74 L726.79 89.04 L728.91 88.33 L731.03 87.62 L733.15 86.92 L735.27 86.21 L737.39 85.51 L739.51 84.80 L741.63 84.10 L743.75 83.40 L745.87 82.69 L747.99 81.99 L750.11 81.29 L752.24 80.59 L754.36 79.90 L756.48 79.20 L758.60 78.50 L760.72 77.81 L762.84 77.11 L764.95 76.42 L767.07 75.72 L769.19 75.03 L771.30 74.34 L773.41 73.65 L775.52 72.97 L777.63 72.28 L779.74 71.60 L781.84 70.91 L783.94 70.23 L786.04 69.55 L788.13 68.87 L790.23 68.20 L792.31 67.52 L794.40 66.85 L796.48 66.18 L798.55 65.51 L800.62 64.84 L802.69 64.18 L804.75 63.52 L806.80 62.86 L808.85 62.21 L810.89 61.55 L812.92 60.91 L814.95 60.26 L816.96 59.62 L818.97 58.98 L820.97 58.35 L822.96 57.72 L824.93 57.09 L826.90 56.47 L828.85 55.86 L830.79 55.25 L832.71 54.65 L834.62 54.05 L836.52 53.46 L838.39 52.88 L840.25 52.30 L842.09 51.74 L843.91 51.18 L845.70 50.63 L847.47 50.09 L849.22 49.57 L850.94 49.05 L852.63 48.55 L854.29 48.06 L855.91 47.58 L857.51 47.12 L859.06 46.68 L860.58 46.26 L862.06 45.85 L863.49 45.46 L864.88 45.10 L866.23 44.76 L867.52 44.44 L868.77 44.15 L869.96 43.88 L871.10 43.65 L872.18 43.44 L873.21 43.26 L874.18 43.11 L875.10 43.00" stroke="#fff000" stroke-width="1.39" stroke-dasharray="1.39 2.29"/>
<path d="M486.90 178.70 L489.26 177.74 L491.62 176.77 L494.00 175.81 L496.38 174.85 L498.78 173.89 L501.18 172.93 L503.60 171.96 L506.02 171.00 L508.45 170.05 L510.89 169.09 L513.34 168.13 L515.80 167.17 L518.27 166.21 L520.75 165.26 L523.23 164.30 L525.72 163.35 L528.22 162.39 L530.73 161.44 L533.25 160.49 L535.78 159.54 L538.31 158.59 L540.85 157.64 L543.40 156.69 L545.95 155.74 L548.51 154.79 L551.08 153.84 L553.66 152.90 L556.24 151.95 L558.83 151.01 L561.43 150.07 L564.03 149.13 L566.64 148.18 L569.25 147.24 L571.87 146.31 L574.50 145.37 L577.13 144.43 L579.77 143.50 L582.41 142.56 L585.06 141.63 L587.71 140.70 L590.37 139.77 L593.03 138.84 L595.69 137.91 L598.37 136.98 L601.04 136.06 L603.72 135.13 L606.40 134.21 L609.09 133.29 L611.78 132.37 L614.47 131.45 L617.16 130.54 L619.86 129.62 L622.56 128.71 L625.26 127.80 L627.97 126.89 L630.67 125.98 L633.38 125.08 L636.09 124.17 L638.80 123.27 L641.51 122.37 L644.23 121.48 L646.94 120.58 L649.65 119.69 L652.36 118.80 L655.08 117.91 L657.79 117.02 L660.50 116.14 L663.21 115.26 L665.92 114.38 L668.62 113.51 L671.33 112.64 L674.03 111.77 L676.73 110.90 L679.42 110.04 L682.12 109.18 L684.81 108.32 L687.49 107.47 L690.17 106.62 L692.85 105.78 L695.51 104.94 L698.18 104.10 L700.84 103.26 L703.49 102.44 L706.13 101.61 L708.77 100.79 L711.40 99.97 L714.02 99.16 L716.63 98.36 L719.24 97.56 L721.83 96.76 L724.41 95.97 L726.98 95.19 L729.54 94.41 L732.09 93.64 L734.63 92.87 L737.15 92.11 L739.66 91.36 L742.16 90.61 L744.63 89.87 L747.10 89.14 L749.55 88.42 L751.98 87.71 L754.39 87.00 L756.78 86.30 L759.16 85.61 L761.51 84.93 L763.85 84.26 L766.16 83.60 L768.45 82.95 L770.71 82.31 L772.96 81.69 L775.17 81.07 L777.37 80.47 L779.53 79.87 L781.67 79.29 L783.78 78.73 L785.86 78.17 L787.91 77.64 L789.93 77.11 L791.92 76.60 L793.87 76.11 L795.79 75.63 L797.68 75.17 L799.53 74.72 L801.35 74.29 L803.13 73.88 L804.87 73.49 L806.58 73.12 L808.25 72.76 L809.87 72.43 L811.46 72.11 L813.01 71.82 L814.52 71.55 L815.98 71.29 L817.41 71.06 L818.79 70.85 L820.14 70.67 L821.44 70.50 L822.70 70.36 L823.92 70.24 L825.10 70.15 L826.23 70.08 L827.33 70.03 L828.38 70.01 L829.40 70.00 L830.37 70.03 L831.31 70.07 L832.21 70.14 L833.08 70.24 L833.90 70.35 L834.69 70.49 L835.45 70.65 L836.17 70.84 L836.86 71.05 L837.52 71.27 L838.14 71.53 L838.74 71.80 L839.31 72.09 L839.85 72.40 L840.36 72.74 L840.85 73.09 L841.31 73.46 L841.75 73.85 L842.17 74.26 L842.56 74.69 L842.94 75.13 L843.29 75.59 L843.63 76.07 L843.94 76.56 L844.24 77.07 L844.52 77.59 L844.79 78.13 L845.05 78.68 L845.28 79.25 L845.51 79.83 L845.72 80.42 L845.92 81.02 L846.11 81.64 L846.29 82.27 L846.46 82.90 L846.62 83.55 L846.77 84.21 L846.91 84.88 L847.04 85.56 L847.16 86.25 L847.28 86.95 L847.39 87.65 L847.49 88.37 L847.59 89.09 L847.68 89.82 L847.77 90.56 L847.85 91.30 L847.93 92.05 L848.00 92.81 L848.07 93.58 L848.13 94.35 L848.19 95.13 L848.25 95.91 L848.30 96.70" stroke="#fff000" stroke-width="1.39" stroke-dasharray="1.39 2.29"/>
<path d="M506.50 308.30 L507.01 306.86 L507.55 305.43 L508.11 303.99 L508.70 302.55 L509.30 301.11 L509.93 299.68 L510.59 298.24 L511.26 296.80 L511.96 295.37 L512.69 293.93 L513.43 292.49 L514.20 291.06 L514.99 289.62 L515.81 288.18 L516.65 286.75 L517.51 285.31 L518.39 283.87 L519.29 282.44 L520.22 281.00 L521.17 279.57 L522.15 278.13 L523.14 276.70 L524.16 275.26 L525.20 273.82 L526.26 272.39 L527.35 270.95 L528.45 269.52 L529.58 268.08 L530.73 266.65 L531.90 265.22 L533.10 263.78 L534.31 262.35 L535.55 260.91 L536.81 259.48 L538.09 258.05 L539.39 256.61 L540.71 255.18 L542.05 253.75 L543.42 252.31 L544.80 250.88 L546.21 249.45 L547.64 248.02 L549.08 246.58 L550.55 245.15 L552.04 243.72 L553.55 242.29 L555.08 240.86 L556.63 239.43 L558.20 238.00 L559.79 236.57 L561.40 235.14 L563.03 233.71 L564.67 232.28 L566.34 230.85 L568.03 229.42 L569.74 227.99 L571.46 226.57 L573.21 225.14 L574.97 223.71 L576.75 222.28 L578.55 220.86 L580.37 219.43 L582.21 218.01 L584.06 216.58 L585.94 215.16 L587.83 213.73 L589.74 212.31 L591.66 210.89 L593.61 209.46 L595.57 208.04 L597.55 206.62 L599.55 205.20 L601.56 203.78 L603.59 202.36 L605.63 200.94 L607.70 199.52 L609.78 198.10 L611.87 196.68 L613.98 195.26 L616.11 193.84 L618.25 192.43 L620.41 191.01 L622.58 189.60 L624.77 188.18 L626.98 186.77 L629.19 185.36 L631.43 183.95 L633.67 182.54 L635.94 181.12 L638.21 179.72 L640.50 178.31 L642.80 176.90 L645.12 175.49 L647.45 174.09 L649.79 172.68 L652.15 171.28 L654.52 169.88 L656.90 168.47 L659.29 167.07 L661.70 165.67 L664.11 164.28 L666.54 162.88 L668.98 161.48 L671.43 160.09 L673.90 158.69 L676.37 157.30 L678.85 155.91 L681.35 154.52 L683.85 153.14 L686.36 151.75 L688.88 150.37 L691.42 148.98 L693.96 147.60 L696.51 146.22 L699.06 144.85 L701.63 143.47 L704.21 142.10 L706.79 140.73 L709.38 139.36 L711.97 137.99 L714.57 136.63 L717.18 135.27 L719.80 133.91 L722.42 132.55 L725.04 131.20 L727.67 129.84 L730.31 128.50 L732.95 127.15 L735.59 125.81 L738.24 124.47 L740.89 123.13 L743.54 121.80 L746.20 120.47 L748.86 119.15 L751.51 117.83 L754.17 116.51 L756.83 115.20 L759.49 113.90 L762.15 112.59 L764.81 111.30 L767.47 110.01 L770.12 108.72 L772.78 107.44 L775.43 106.17 L778.07 104.90 L780.71 103.64 L783.35 102.39 L785.98 101.14 L788.60 99.90 L791.22 98.67 L793.82 97.45 L796.42 96.24 L799.01 95.04 L801.59 93.85 L804.16 92.66 L806.71 91.49 L809.26 90.34 L811.78 89.19 L814.29 88.06 L816.79 86.94 L819.27 85.84 L821.73 84.75 L824.17 83.68 L826.59 82.63 L828.98 81.60 L831.36 80.58 L833.70 79.59 L836.03 78.62 L838.32 77.67 L840.59 76.75 L842.82 75.85 L845.03 74.98 L847.20 74.14 L849.33 73.33 L851.44 72.55 L853.50 71.81 L855.53 71.10 L857.52 70.43 L859.47 69.80 L861.38 69.21 L863.26 68.67 L865.09 68.17 L866.88 67.71 L868.63 67.30 L870.34 66.94 L872.01 66.64 L873.64 66.38 L875.23 66.18 L876.79 66.03 L878.31 65.93 L879.80 65.89 L881.26 65.90 L882.70 65.97 L884.10 66.09 L885.48 66.27 L886.84 66.50 L888.17 66.78 L889.49 67.12 L890.80 67.50" stroke="#a4ff28" stroke-width="1.39" stroke-dasharray="1.39 2.29"/>
<path d="M1105.00 104.50 L1103.68 104.00 L1102.36 103.50 L1101.03 103.01 L1099.71 102.51 L1098.38 102.01 L1097.05 101.51 L1095.72 101.02 L1094.39 100.52 L1093.06 100.02 L1091.73 99.52 L1090.40 99.03 L1089.07 98.53 L1087.73 98.03 L1086.39 97.54 L1085.06 97.04 L1083.72 96.55 L1082.38 96.05 L1081.04 95.55 L1079.70 95.06 L1078.36 94.56 L1077.02 94.07 L1075.67 93.57 L1074.33 93.08 L1072.99 92.58 L1071.64 92.09 L1070.29 91.59 L1068.95 91.10 L1067.60 90.60 L1066.25 90.11 L1064.90 89.61 L1063.55 89.12 L1062.20 88.63 L1060.85 88.13 L1059.50 87.64 L1058.15 87.15 L1056.79 86.65 L1055.44 86.16 L1054.09 85.67 L1052.73 85.18 L1051.38 84.69 L1050.02 84.19 L1048.67 83.70 L1047.31 83.21 L1045.95 82.72 L1044.60 82.23 L1043.24 81.74 L1041.88 81.25 L1040.53 80.76 L1039.17 80.27 L1037.81 79.78 L1036.45 79.29 L1035.10 78.80 L1033.74 78.32 L1032.38 77.83 L1031.02 77.34 L1029.66 76.85 L1028.30 76.37 L1026.95 75.88 L1025.59 75.40 L1024.23 74.91 L1022.87 74.42 L1021.52 73.94 L1020.16 73.46 L1018.80 72.97 L1017.45 72.49 L1016.09 72.01 L1014.74 71.52 L1013.38 71.04 L1012.03 70.56 L1010.68 70.08 L1009.33 69.60 L1007.97 69.12 L1006.62 68.64 L1005.27 68.16 L1003.92 67.69 L1002.58 67.21 L1001.23 66.73 L999.89 66.26 L998.54 65.78 L997.20 65.31 L995.86 64.84 L994.52 64.37 L993.18 63.89 L991.84 63.42 L990.51 62.96 L989.18 62.49 L987.84 62.02 L986.52 61.55 L985.19 61.09 L983.87 60.63 L982.54 60.16 L981.22 59.70 L979.91 59.24 L978.60 58.78 L977.28 58.33 L975.98 57.87 L974.67 57.42 L973.37 56.96 L972.08 56.51 L970.78 56.07 L969.50 55.62 L968.21 55.17 L966.93 54.73 L965.66 54.29 L964.39 53.85 L963.12 53.42 L961.86 52.98 L960.61 52.55 L959.36 52.13 L958.12 51.70 L956.89 51.28 L955.66 50.86 L954.44 50.45 L953.23 50.04 L952.03 49.63 L950.83 49.22 L949.65 48.83 L948.47 48.43 L947.31 48.04 L946.15 47.66 L945.01 47.28 L943.88 46.90 L942.76 46.54 L941.66 46.18 L940.56 45.82 L939.49 45.47 L938.42 45.13 L937.38 44.80 L936.35 44.48 L935.33 44.16 L934.34 43.86 L933.36 43.56 L932.41 43.28 L931.47 43.00 L930.56 42.74 L929.66 42.49 L928.79 42.25 L927.95 42.03 L927.13 41.82 L926.33 41.62 L925.56 41.44 L924.81 41.27 L924.09 41.12 L923.40 40.99 L922.73 40.88 L922.09 40.78 L921.48 40.70 L920.89 40.64 L920.33 40.60 L919.80 40.58 L919.28 40.57 L918.80 40.59 L918.34 40.62 L917.90 40.68 L917.48 40.75 L917.08 40.84 L916.70 40.95 L916.34 41.07 L916.00 41.21 L915.67 41.37 L915.36 41.55 L915.07 41.74 L914.78 41.94 L914.51 42.16 L914.25 42.39 L914.01 42.64 L913.77 42.90 L913.53 43.17 L913.31 43.45 L913.10 43.74 L912.89 44.04 L912.68 44.35 L912.49 44.67 L912.29 45.00 L912.11 45.34 L911.92 45.68 L911.74 46.03 L911.57 46.39 L911.39 46.76 L911.22 47.13 L911.06 47.51 L910.89 47.89 L910.73 48.28 L910.57 48.67 L910.41 49.07 L910.25 49.47 L910.10 49.87 L909.94 50.28 L909.79 50.70 L909.63 51.11 L909.48 51.54 L909.33 51.96 L909.18 52.39 L909.03 52.81 L908.89 53.25 L908.74 53.68 L908.59 54.12 L908.45 54.56 L908.30 55.00" stroke="#dd11ff" stroke-width="1.39" stroke-dasharray="1.39 2.29"/>
<path d="M1077.70 94.30 L1076.22 93.85 L1074.74 93.40 L1073.27 92.96 L1071.80 92.51 L1070.34 92.07 L1068.88 91.63 L1067.42 91.20 L1065.97 90.76 L1064.52 90.33 L1063.08 89.90 L1061.64 89.47 L1060.20 89.04 L1058.77 88.62 L1057.35 88.19 L1055.93 87.77 L1054.52 87.36 L1053.11 86.94 L1051.71 86.53 L1050.31 86.12 L1048.92 85.71 L1047.53 85.31 L1046.15 84.91 L1044.78 84.51 L1043.41 84.11 L1042.05 83.72 L1040.70 83.33 L1039.35 82.94 L1038.01 82.56 L1036.67 82.18 L1035.35 81.80 L1034.03 81.43 L1032.72 81.06 L1031.42 80.69 L1030.12 80.33 L1028.83 79.97 L1027.55 79.62 L1026.28 79.26 L1025.02 78.92 L1023.77 78.57 L1022.52 78.23 L1021.29 77.90 L1020.06 77.56 L1018.84 77.24 L1017.64 76.91 L1016.44 76.59 L1015.25 76.28 L1014.07 75.97 L1012.90 75.67 L1011.75 75.37 L1010.60 75.07 L1009.46 74.78 L1008.34 74.50 L1007.23 74.22 L1006.12 73.94 L1005.03 73.67 L1003.95 73.41 L1002.88 73.15 L1001.83 72.90 L1000.78 72.65 L999.75 72.41 L998.73 72.17 L997.72 71.94 L996.73 71.72 L995.75 71.50 L994.78 71.29 L993.82 71.09 L992.88 70.89 L991.95 70.70 L991.03 70.51 L990.13 70.33 L989.24 70.16 L988.37 70.00 L987.50 69.84 L986.66 69.69 L985.82 69.55 L985.00 69.41 L984.19 69.28 L983.40 69.16 L982.62 69.05 L981.86 68.94 L981.11 68.84 L980.37 68.75 L979.65 68.66 L978.94 68.59 L978.25 68.52 L977.57 68.46 L976.90 68.40 L976.25 68.36 L975.61 68.32 L974.98 68.29 L974.37 68.27 L973.77 68.25 L973.19 68.25 L972.62 68.25 L972.06 68.26 L971.52 68.27 L970.98 68.30 L970.47 68.33 L969.96 68.37 L969.47 68.42 L968.99 68.48 L968.52 68.54 L968.06 68.61 L967.62 68.69 L967.19 68.78 L966.77 68.88 L966.36 68.98 L965.96 69.09 L965.57 69.20 L965.20 69.33 L964.83 69.46 L964.48 69.60 L964.13 69.75 L963.80 69.90 L963.47 70.06 L963.16 70.23 L962.85 70.40 L962.56 70.58 L962.27 70.77 L961.99 70.96 L961.72 71.16 L961.46 71.37 L961.21 71.58 L960.97 71.80 L960.73 72.03 L960.50 72.26 L960.28 72.50 L960.06 72.74 L959.86 72.99 L959.66 73.25 L959.46 73.51 L959.28 73.77 L959.10 74.04 L958.92 74.32 L958.75 74.60 L958.59 74.89 L958.43 75.18 L958.28 75.48 L958.14 75.78 L958.00 76.09 L957.86 76.40 L957.73 76.71 L957.60 77.04 L957.48 77.36 L957.37 77.69 L957.25 78.02 L957.15 78.36 L957.04 78.70 L956.94 79.05 L956.84 79.40 L956.75 79.75 L956.66 80.11 L956.58 80.47 L956.49 80.83 L956.42 81.20 L956.34 81.57 L956.27 81.95 L956.20 82.32 L956.13 82.71 L956.07 83.09 L956.01 83.48 L955.95 83.87 L955.89 84.26 L955.84 84.66 L955.79 85.06 L955.74 85.46 L955.69 85.87 L955.65 86.27 L955.60 86.69 L955.56 87.10 L955.52 87.51 L955.49 87.93 L955.45 88.35 L955.42 88.78 L955.39 89.20 L955.36 89.63 L955.33 90.06 L955.30 90.49 L955.27 90.92 L955.25 91.36 L955.23 91.80 L955.21 92.24 L955.19 92.68 L955.17 93.13 L955.15 93.57 L955.13 94.02 L955.12 94.47 L955.10 94.92 L955.09 95.38 L955.08 95.83 L955.06 96.29 L955.05 96.75 L955.04 97.21 L955.03 97.67 L955.03 98.13 L955.02 98.60 L955.01 99.06 L955.01 99.53 L955.00 100.00" stroke="#dd11ff" stroke-width="1.39" stroke-dasharray="1.39 2.29"/>
<path d="M492.8 175.6h6M495.8 172.6v6" stroke="#ff0000" stroke-width="1.2"/>
<path d="M483.9 178.7h6M486.9 175.7v6" stroke="#ff0000" stroke-width="1.2"/>
<path d="M503.5 308.3h6M506.5 305.3v6" stroke="#ff0000" stroke-width="1.2"/>
<path d="M1102.0 104.5h6M1105.0 101.5v6" stroke="#ff0000" stroke-width="1.2"/>
<path d="M1074.7 94.3h6M1077.7 91.3v6" stroke="#ff0000" stroke-width="1.2"/>
<path d="M550.64 155.87 L547.00 156.10 L542.38 156.78 L536.87 157.91 L530.60 159.44 L523.71 161.34 L516.37 163.57 L508.75 166.09 L501.01 168.84 L493.33 171.76 L485.86 174.80 L478.75 177.90 L472.12 181.03 L466.08 184.12 L460.71 187.12 L456.09 190.00 L452.26 192.71 L449.24 195.22 L447.07 197.49 L445.73 199.49 L445.21 201.20 L445.50 202.59 L446.55 203.65 L448.34 204.37 L450.82 204.72 L453.94 204.72 L457.65 204.37 L461.90 203.65 L466.64 202.59 L471.81 201.20 L477.36 199.49 L483.21 197.49 L489.31 195.22 L495.60 192.71 L501.99 190.00 L508.42 187.12 L514.81 184.12 L521.06 181.03 L527.09 177.90 L532.80 174.80 L538.08 171.76 L542.84 168.84 L546.97 166.09 L550.36 163.57 L552.91 161.34 L554.54 159.44 L555.17 157.91 L554.74 156.78 L553.23 156.10 L550.64 155.87" stroke="#fff000" stroke-width="2.08" stroke-linejoin="round" stroke-linecap="square"/>
<path d="M511.50 282.19 L508.30 282.40 L504.97 283.01 L501.59 284.01 L498.21 285.39 L494.92 287.11 L491.78 289.16 L488.87 291.50 L486.25 294.08 L484.01 296.87 L482.18 299.82 L480.81 302.87 L479.94 305.98 L479.58 309.10 L479.73 312.18 L480.39 315.17 L481.54 318.02 L483.13 320.69 L485.13 323.12 L487.47 325.29 L490.10 327.15 L492.95 328.68 L495.96 329.85 L499.07 330.65 L502.22 331.04 L505.34 331.04 L508.38 330.65 L511.32 329.85 L514.09 328.68 L516.69 327.15 L519.07 325.29 L521.23 323.12 L523.15 320.69 L524.81 318.02 L526.21 315.17 L527.34 312.18 L528.19 309.10 L528.75 305.98 L529.02 302.87 L528.99 299.82 L528.65 296.87 L527.99 294.08 L527.01 291.50 L525.70 289.16 L524.07 287.11 L522.13 285.39 L519.87 284.01 L517.33 283.01 L514.52 282.40 L511.50 282.19" stroke="#a4ff28" stroke-width="2.08" stroke-linejoin="round" stroke-linecap="square"/>
<path d="M1024.69 67.85 L1022.51 68.17 L1022.17 69.09 L1023.55 70.58 L1026.46 72.54 L1030.69 74.90 L1036.02 77.57 L1042.24 80.45 L1049.16 83.48 L1056.64 86.58 L1064.51 89.70 L1072.66 92.80 L1080.97 95.82 L1089.34 98.73 L1097.68 101.50 L1105.89 104.10 L1113.89 106.50 L1121.62 108.69 L1128.98 110.64 L1135.93 112.34 L1142.38 113.78 L1148.29 114.94 L1153.58 115.83 L1158.20 116.42 L1162.09 116.71 L1165.21 116.71 L1167.51 116.42 L1168.94 115.83" stroke="#dd11ff" stroke-width="2.08" stroke-linejoin="round" stroke-linecap="square"/>
<path d="M638.30 114.94 L644.42 113.78 L651.14 112.34 L658.40 110.64 L666.13 108.69 L674.26 106.50 L682.72 104.10 L691.42 101.50 L700.28 98.73 L709.21 95.82 L718.10 92.80 L726.85 89.70 L735.33 86.58 L743.42 83.48 L750.94 80.45 L757.73 77.57 L763.58 74.90 L768.28 72.54 L771.59 70.58 L773.27 69.09" stroke="#dd11ff" stroke-width="2.08" stroke-linejoin="round" stroke-linecap="square"/>
<path d="M1028.74 68.17 L1024.69 67.85" stroke="#dd11ff" stroke-width="2.08" stroke-linejoin="round" stroke-linecap="square"/>
<path d="M894.60 129.30 L895.55 129.35 L896.49 129.41 L897.44 129.48 L898.38 129.55 L899.33 129.64 L900.27 129.73 L901.22 129.83 L902.16 129.93 L903.11 130.05 L904.05 130.17 L905.00 130.30" stroke="#666" stroke-width="1.39"/>
<path d="M1176.70 144.20 L1171.60 142.60 L1166.53 141.03 L1161.50 139.49 L1156.51 137.98 L1151.56 136.50 L1146.66 135.04 L1141.81 133.62 L1137.02 132.24 L1132.28 130.89 L1127.61 129.58 L1123.00 128.30" stroke="#666" stroke-width="1.39"/>
<path d="M1150.00 142.50 L1150.26 143.15 L1150.52 143.81 L1150.80 144.47 L1151.09 145.14 L1151.38 145.81 L1151.68 146.50 L1151.99 147.19 L1152.31 147.88 L1152.63 148.58 L1152.96 149.29 L1153.30 150.00" stroke="#666" stroke-width="1.39"/>
<path d="M1157.00 164.20 L1156.09 164.27 L1155.19 164.35 L1154.30 164.43 L1153.42 164.52 L1152.55 164.61 L1151.69 164.71 L1150.83 164.82 L1149.99 164.93 L1149.15 165.05 L1148.32 165.17 L1147.50 165.30" stroke="#666" stroke-width="1.39"/>
<path d="M875.10 43.00 L876.17 42.92 L877.15 42.89 L878.04 42.92 L878.85 43.00 L879.58 43.14 L880.23 43.33 L880.82 43.57 L881.34 43.86 L881.81 44.20 L882.23 44.58 L882.60 45.00" stroke="#fff000" stroke-width="1.39" stroke-linecap="square"/>
<rect x="881.5" y="43.9" width="2.2" height="2.2" fill="#ff6347" stroke="none"/>
<path d="M848.30 96.70 L848.36 97.50 L848.41 98.31 L848.46 99.12 L848.51 99.94 L848.56 100.76 L848.61 101.59 L848.65 102.43 L848.69 103.26 L848.73 104.10 L848.76 104.95 L848.80 105.80" stroke="#fff000" stroke-width="1.39" stroke-linecap="square"/>
<rect x="847.7" y="104.7" width="2.2" height="2.2" fill="#ff6347" stroke="none"/>
<path d="M890.80 67.50 L892.94 68.19 L895.05 69.01 L897.14 69.95 L899.22 71.00 L901.29 72.15 L903.36 73.39 L905.43 74.73 L907.51 76.14 L909.60 77.63 L911.69 79.18 L913.80 80.80" stroke="#a4ff28" stroke-width="1.39" stroke-linecap="square"/>
<rect x="912.7" y="79.7" width="2.2" height="2.2" fill="#ff6347" stroke="none"/>
<path d="M908.30 55.00 L908.07 55.51 L907.84 56.02 L907.61 56.54 L907.38 57.06 L907.16 57.59 L906.93 58.12 L906.70 58.65 L906.48 59.18 L906.25 59.72 L906.03 60.26 L905.80 60.80" stroke="#dd11ff" stroke-width="1.39" stroke-linecap="square"/>
<rect x="904.7" y="59.7" width="2.2" height="2.2" fill="#ff6347" stroke="none"/>
<path d="M955.00 100.00 L954.96 101.10 L954.92 102.21 L954.89 103.33 L954.86 104.45 L954.83 105.58 L954.80 106.72 L954.78 107.86 L954.76 109.01 L954.74 110.17 L954.72 111.33 L954.70 112.50" stroke="#dd11ff" stroke-width="1.39" stroke-linecap="square"/>
<rect x="953.6" y="111.4" width="2.2" height="2.2" fill="#ff6347" stroke="none"/>
<text x="497.5" y="184.4" text-anchor="middle" font-family="'DejaVu Sans','Liberation Sans',sans-serif" font-size="11.11" fill="#fff" stroke="none" letter-spacing="-0.5">PSU</text>
<text x="503.7" y="310.7" text-anchor="middle" font-family="'DejaVu Sans','Liberation Sans',sans-serif" font-size="11.11" fill="#fff" stroke="none" letter-spacing="-0.5">HYD</text>
<text x="1095.5" y="95.9" text-anchor="middle" font-family="'DejaVu Sans','Liberation Sans',sans-serif" font-size="11.11" fill="#fff" stroke="none" letter-spacing="-0.5">DKD</text>
</g>
<text x="903.2" y="623.6" text-anchor="middle" font-family="'Liberation Serif',serif" font-size="12" fill="#808080">−90<tspan font-size="8" dx="2.9" dy="-3.4">°</tspan></text>
<text x="903.2" y="525.8" text-anchor="middle" font-family="'Liberation Serif',serif" font-size="12" fill="#808080">−60<tspan font-size="8" dx="2.9" dy="-3.4">°</tspan></text>
<text x="903.2" y="428.0" text-anchor="middle" font-family="'Liberation Serif',serif" font-size="12" fill="#808080">−30<tspan font-size="8" dx="2.9" dy="-3.4">°</tspan></text>
<text x="903.2" y="330.2" text-anchor="middle" font-family="'Liberation Serif',serif" font-size="12" fill="#808080">+0<tspan font-size="8" dx="2.9" dy="-3.4">°</tspan></text>
<text x="903.2" y="220.3" text-anchor="middle" font-family="'Liberation Serif',serif" font-size="12" fill="#808080">+30<tspan font-size="8" dx="2.9" dy="-3.4">°</tspan></text>
<text x="903.2" y="122.5" text-anchor="middle" font-family="'Liberation Serif',serif" font-size="12" fill="#808080">+60<tspan font-size="8" dx="2.9" dy="-3.4">°</tspan></text>
<text x="903.2" y="24.7" text-anchor="middle" font-family="'Liberation Serif',serif" font-size="12" fill="#808080">+90<tspan font-size="8" dx="2.9" dy="-3.4">°</tspan></text>
<text x="903.2" y="330.2" text-anchor="middle" font-family="'Liberation Serif',serif" font-size="12" fill="#808080">+0<tspan font-size="8" dx="2.9" dy="-3.4">°</tspan></text>
<text x="805.6" y="330.2" text-anchor="middle" font-family="'Liberation Serif',serif" font-size="12" fill="#808080">+30<tspan font-size="8" dx="2.9" dy="-3.4">°</tspan></text>
<text x="707.9" y="330.2" text-anchor="middle" font-family="'Liberation Serif',serif" font-size="12" fill="#808080">+60<tspan font-size="8" dx="2.9" dy="-3.4">°</tspan></text>
<text x="610.2" y="330.2" text-anchor="middle" font-family="'Liberation Serif',serif" font-size="12" fill="#808080">+90<tspan font-size="8" dx="2.9" dy="-3.4">°</tspan></text>
<text x="512.5" y="330.2" text-anchor="middle" font-family="'Liberation Serif',serif" font-size="12" fill="#808080">+120<tspan font-size="8" dx="2.9" dy="-3.4">°</tspan></text>
<text x="414.9" y="330.2" text-anchor="middle" font-family="'Liberation Serif',serif" font-size="12" fill="#808080">+150<tspan font-size="8" dx="2.9" dy="-3.4">°</tspan></text>
<text x="317.2" y="330.2" text-anchor="middle" font-family="'Liberation Serif',serif" font-size="12" fill="#808080">+180<tspan font-size="8" dx="2.9" dy="-3.4">°</tspan></text>
<text x="1391.7" y="330.2" text-anchor="middle" font-family="'Liberation Serif',serif" font-size="12" fill="#808080">+210<tspan font-size="8" dx="2.9" dy="-3.4">°</tspan></text>
<text x="1294.0" y="330.2" text-anchor="middle" font-family="'Liberation Serif',serif" font-size="12" fill="#808080">+240<tspan font-size="8" dx="2.9" dy="-3.4">°</tspan></text>
<text x="1196.3" y="330.2" text-anchor="middle" font-family="'Liberation Serif',serif" font-size="12" fill="#808080">+270<tspan font-size="8" dx="2.9" dy="-3.4">°</tspan></text>
<text x="1098.6" y="330.2" text-anchor="middle" font-family="'Liberation Serif',serif" font-size="12" fill="#808080">+300<tspan font-size="8" dx="2.9" dy="-3.4">°</tspan></text>
<text x="1000.9" y="330.2" text-anchor="middle" font-family="'Liberation Serif',serif" font-size="12" fill="#808080">+330<tspan font-size="8" dx="2.9" dy="-3.4">°</tspan></text>
<text x="1489.3" y="330.2" text-anchor="middle" font-family="'Liberation Serif',serif" font-size="12" fill="#808080">+180<tspan font-size="8" dx="2.9" dy="-3.4">°</tspan></text>
<text x="315.0" y="29.8" font-family="'DejaVu Sans Mono','Liberation Mono',monospace" font-size="13.89" fill="#fff" xml:space="preserve">UK004R</text>
<text x="315.0" y="42.8" font-family="'DejaVu Sans Mono','Liberation Mono',monospace" font-size="13.89" fill="#fff" xml:space="preserve">Beg: 20251204 05:11:32 (sol = 251.94°)</text>
<text x="315.0" y="55.8" font-family="'DejaVu Sans Mono','Liberation Mono',monospace" font-size="13.89" fill="#fff" xml:space="preserve">End: 20251204 06:30:08 (sol = 252.00°)</text>
<text x="315.0" y="68.9" font-family="'DejaVu Sans Mono','Liberation Mono',monospace" font-size="13.89" fill="#fff" xml:space="preserve">--------------------------------------</text>
<text x="315.0" y="81.9" font-family="'DejaVu Sans Mono','Liberation Mono',monospace" font-size="13.89" fill="#fff" xml:space="preserve">...: 5</text>
<text x="315.0" y="95.0" font-family="'DejaVu Sans Mono','Liberation Mono',monospace" font-size="13.89" fill="#fff" xml:space="preserve">DKD: 2</text>
<text x="315.0" y="108.0" font-family="'DejaVu Sans Mono','Liberation Mono',monospace" font-size="13.89" fill="#fff" xml:space="preserve">PSU: 2</text>
<text x="315.0" y="121.0" font-family="'DejaVu Sans Mono','Liberation Mono',monospace" font-size="13.89" fill="#fff" xml:space="preserve">HYD: 1</text>
<g>
<text transform="translate(1468.3,641.0) rotate(-90)" text-anchor="end" font-family="'DejaVu Sans','Liberation Sans',sans-serif" font-size="27.5" fill="#fff" fill-opacity="0.3">JAN</text>
<text transform="translate(1627.3,645.0) rotate(-90)" text-anchor="end" font-family="'DejaVu Sans','Liberation Sans',sans-serif" font-size="27.5" fill="#fff" fill-opacity="0.3">FEB</text>
<text transform="translate(1765.0,646.0) rotate(-90)" text-anchor="end" font-family="'DejaVu Sans','Liberation Sans',sans-serif" font-size="27.5" fill="#fff" fill-opacity="0.3">MAR</text>
<text transform="translate(148.0,644.0) rotate(-90)" text-anchor="end" font-family="'DejaVu Sans','Liberation Sans',sans-serif" font-size="27.5" fill="#fff" fill-opacity="0.3">APR</text>
<text transform="translate(293.0,644.0) rotate(-90)" text-anchor="end" font-family="'DejaVu Sans','Liberation Sans',sans-serif" font-size="27.5" fill="#fff" fill-opacity="0.3">MAY</text>
<text transform="translate(435.0,641.0) rotate(-90)" text-anchor="end" font-family="'DejaVu Sans','Liberation Sans',sans-serif" font-size="27.5" fill="#fff" fill-opacity="0.3">JUN</text>
<text transform="translate(575.7,640.0) rotate(-90)" text-anchor="end" font-family="'DejaVu Sans','Liberation Sans',sans-serif" font-size="27.5" fill="#fff" fill-opacity="0.3">JUL</text>
<text transform="translate(722.3,643.0) rotate(-90)" text-anchor="end" font-family="'DejaVu Sans','Liberation Sans',sans-serif" font-size="27.5" fill="#fff" fill-opacity="0.3">AUG</text>
<text transform="translate(871.3,644.0) rotate(-90)" text-anchor="end" font-family="'DejaVu Sans','Liberation Sans',sans-serif" font-size="27.5" fill="#fff" fill-opacity="0.3">SEP</text>
<text transform="translate(1015.7,643.0) rotate(-90)" text-anchor="end" font-family="'DejaVu Sans','Liberation Sans',sans-serif" font-size="27.5" fill="#fff" fill-opacity="0.3">OCT</text>
<text transform="translate(1169.0,645.0) rotate(-90)" text-anchor="end" font-family="'DejaVu Sans','Liberation Sans',sans-serif" font-size="27.5" fill="#fff" fill-opacity="0.3">NOV</text>
<text transform="translate(1317.3,646.0) rotate(-90)" text-anchor="end" font-family="'DejaVu Sans','Liberation Sans',sans-serif" font-size="27.5" fill="#fff" fill-opacity="0.3">DEC</text>
</g>
<line x1="1255.34" x2="1255.34" y1="842.5" y2="641.5" stroke="#ff0000" stroke-width="1.39" stroke-dasharray="5.14 2.22"/>
<line x1="1255.63" x2="1255.63" y1="842.5" y2="641.5" stroke="#ff0000" stroke-width="1.39" stroke-dasharray="5.14 2.22"/>
<g stroke-width="4.17" stroke-linecap="square">
<line x1="108.00" x2="127.00" y1="834.00" y2="834.00" stroke="#ec84ef"/>
<line x1="167.00" x2="343.00" y1="834.00" y2="834.00" stroke="#ec84ef"/>
<line x1="368.00" x2="623.00" y1="834.00" y2="834.00" stroke="#ec84ef"/>
<line x1="638.00" x2="785.00" y1="834.00" y2="834.00" stroke="#ec84ef"/>
<line x1="809.00" x2="898.00" y1="834.00" y2="834.00" stroke="#ec84ef"/>
<line x1="922.00" x2="971.00" y1="834.00" y2="834.00" stroke="#ec84ef"/>
<line x1="986.00" x2="1064.00" y1="834.00" y2="834.00" stroke="#ec84ef"/>
<line x1="1084.00" x2="1202.00" y1="834.00" y2="834.00" stroke="#ec84ef"/>
<line x1="1246.00" x2="1324.00" y1="834.00" y2="834.00" stroke="#ec84ef"/>
<line x1="1339.00" x2="1354.00" y1="834.00" y2="834.00" stroke="#ec84ef"/>
<line x1="1383.00" x2="1442.00" y1="834.00" y2="834.00" stroke="#ec84ef"/>
<line x1="1462.00" x2="1511.00" y1="834.00" y2="834.00" stroke="#ec84ef"/>
<line x1="1525.00" x2="1545.00" y1="834.00" y2="834.00" stroke="#ec84ef"/>
<line x1="1727.00" x2="1746.00" y1="834.00" y2="834.00" stroke="#ec84ef"/>
<line x1="1761.00" x2="1780.00" y1="834.00" y2="834.00" stroke="#ec84ef"/>
<line x1="167.00" x2="186.00" y1="818.00" y2="818.00" stroke="#dd11ff"/>
<line x1="226.00" x2="284.00" y1="818.00" y2="818.00" stroke="#dd11ff"/>
<line x1="314.00" x2="338.00" y1="818.00" y2="818.00" stroke="#dd11ff"/>
<line x1="368.00" x2="490.00" y1="818.00" y2="818.00" stroke="#dd11ff"/>
<line x1="510.00" x2="652.00" y1="818.00" y2="818.00" stroke="#dd11ff"/>
<line x1="706.00" x2="736.00" y1="818.00" y2="818.00" stroke="#dd11ff"/>
<line x1="775.00" x2="844.00" y1="818.00" y2="818.00" stroke="#dd11ff"/>
<line x1="873.00" x2="986.00" y1="818.00" y2="818.00" stroke="#dd11ff"/>
<line x1="1005.00" x2="1015.00" y1="818.00" y2="818.00" stroke="#dd11ff"/>
<line x1="1064.00" x2="1211.00" y1="818.00" y2="818.00" stroke="#dd11ff"/>
<line x1="1246.00" x2="1265.00" y1="818.00" y2="818.00" stroke="#dd11ff"/>
<line x1="1295.00" x2="1314.00" y1="818.00" y2="818.00" stroke="#dd11ff"/>
<line x1="1344.00" x2="1364.00" y1="818.00" y2="818.00" stroke="#dd11ff"/>
<line x1="1388.00" x2="1427.00" y1="818.00" y2="818.00" stroke="#dd11ff"/>
<line x1="1462.00" x2="1481.00" y1="818.00" y2="818.00" stroke="#dd11ff"/>
<line x1="1550.00" x2="1570.00" y1="818.00" y2="818.00" stroke="#dd11ff"/>
<line x1="167.00" x2="186.00" y1="802.00" y2="802.00" stroke="#ff1d00"/>
<line x1="260.00" x2="486.00" y1="802.00" y2="802.00" stroke="#ff1d00"/>
<line x1="510.00" x2="613.00" y1="802.00" y2="802.00" stroke="#ff1d00"/>
<line x1="628.00" x2="716.00" y1="802.00" y2="802.00" stroke="#ff1d00"/>
<line x1="731.00" x2="824.00" y1="802.00" y2="802.00" stroke="#ff1d00"/>
<line x1="952.00" x2="1148.00" y1="802.00" y2="802.00" stroke="#ff1d00"/>
<line x1="1162.00" x2="1246.00" y1="802.00" y2="802.00" stroke="#ff1d00"/>
<line x1="1261.00" x2="1442.00" y1="802.00" y2="802.00" stroke="#ff1d00"/>
<line x1="1462.00" x2="1481.00" y1="802.00" y2="802.00" stroke="#ff1d00"/>
<line x1="1555.00" x2="1574.00" y1="802.00" y2="802.00" stroke="#ff1d00"/>
<line x1="196.00" x2="216.00" y1="785.00" y2="785.00" stroke="#ffb20d"/>
<line x1="324.00" x2="505.00" y1="785.00" y2="785.00" stroke="#ffb20d"/>
<line x1="520.00" x2="539.00" y1="785.00" y2="785.00" stroke="#ffb20d"/>
<line x1="559.00" x2="682.00" y1="785.00" y2="785.00" stroke="#ffb20d"/>
<line x1="809.00" x2="829.00" y1="785.00" y2="785.00" stroke="#ffb20d"/>
<line x1="956.00" x2="971.00" y1="785.00" y2="785.00" stroke="#ffb20d"/>
<line x1="991.00" x2="1123.00" y1="785.00" y2="785.00" stroke="#ffb20d"/>
<line x1="1158.00" x2="1216.00" y1="785.00" y2="785.00" stroke="#ffb20d"/>
<line x1="1246.00" x2="1265.00" y1="785.00" y2="785.00" stroke="#ffb20d"/>
<line x1="1319.00" x2="1339.00" y1="785.00" y2="785.00" stroke="#ffb20d"/>
<line x1="1398.00" x2="1418.00" y1="785.00" y2="785.00" stroke="#ffb20d"/>
<line x1="1467.00" x2="1648.00" y1="785.00" y2="785.00" stroke="#ffb20d"/>
<line x1="343.00" x2="368.00" y1="769.00" y2="769.00" stroke="#fff000"/>
<line x1="412.00" x2="446.00" y1="769.00" y2="769.00" stroke="#fff000"/>
<line x1="471.00" x2="490.00" y1="769.00" y2="769.00" stroke="#fff000"/>
<line x1="530.00" x2="544.00" y1="769.00" y2="769.00" stroke="#fff000"/>
<line x1="564.00" x2="589.00" y1="769.00" y2="769.00" stroke="#fff000"/>
<line x1="618.00" x2="647.00" y1="769.00" y2="769.00" stroke="#fff000"/>
<line x1="961.00" x2="986.00" y1="769.00" y2="769.00" stroke="#fff000"/>
<line x1="1064.00" x2="1084.00" y1="769.00" y2="769.00" stroke="#fff000"/>
<line x1="1104.00" x2="1123.00" y1="769.00" y2="769.00" stroke="#fff000"/>
<line x1="1162.00" x2="1192.00" y1="769.00" y2="769.00" stroke="#fff000"/>
<line x1="1251.00" x2="1270.00" y1="769.00" y2="769.00" stroke="#fff000"/>
<line x1="1427.00" x2="1511.00" y1="769.00" y2="769.00" stroke="#fff000"/>
<line x1="422.00" x2="441.00" y1="752.00" y2="752.00" stroke="#a4ff28"/>
<line x1="535.00" x2="554.00" y1="752.00" y2="752.00" stroke="#a4ff28"/>
<line x1="569.00" x2="589.00" y1="752.00" y2="752.00" stroke="#a4ff28"/>
<line x1="623.00" x2="741.00" y1="752.00" y2="752.00" stroke="#a4ff28"/>
<line x1="971.00" x2="1133.00" y1="752.00" y2="752.00" stroke="#a4ff28"/>
<line x1="1187.00" x2="1344.00" y1="752.00" y2="752.00" stroke="#a4ff28"/>
<line x1="1471.00" x2="1491.00" y1="752.00" y2="752.00" stroke="#a4ff28"/>
<line x1="432.00" x2="451.00" y1="736.00" y2="736.00" stroke="#59d200"/>
<line x1="579.00" x2="731.00" y1="736.00" y2="736.00" stroke="#59d200"/>
<line x1="996.00" x2="1104.00" y1="736.00" y2="736.00" stroke="#59d200"/>
<line x1="1118.00" x2="1221.00" y1="736.00" y2="736.00" stroke="#59d200"/>
<line x1="1265.00" x2="1290.00" y1="736.00" y2="736.00" stroke="#59d200"/>
<line x1="1491.00" x2="1511.00" y1="736.00" y2="736.00" stroke="#59d200"/>
<line x1="593.00" x2="613.00" y1="720.00" y2="720.00" stroke="#00fb73"/>
<line x1="657.00" x2="770.00" y1="720.00" y2="720.00" stroke="#00fb73"/>
<line x1="1074.00" x2="1241.00" y1="720.00" y2="720.00" stroke="#00fb73"/>
<line x1="1265.00" x2="1285.00" y1="720.00" y2="720.00" stroke="#00fb73"/>
<line x1="598.00" x2="731.00" y1="703.00" y2="703.00" stroke="#00e0ff"/>
<line x1="1094.00" x2="1118.00" y1="703.00" y2="703.00" stroke="#00e0ff"/>
<line x1="1202.00" x2="1221.00" y1="703.00" y2="703.00" stroke="#00e0ff"/>
<line x1="1275.00" x2="1324.00" y1="703.00" y2="703.00" stroke="#00e0ff"/>
<line x1="1113.00" x2="1133.00" y1="687.00" y2="687.00" stroke="#000ecd"/>
</g>
<g stroke="#fff" stroke-opacity="0.32" stroke-width="2.08" stroke-dasharray="2.08 3.44">
<line x1="1394.00" x2="1394.00" y1="842.0" y2="641.5"/>
<line x1="1548.00" x2="1548.00" y1="842.0" y2="641.5"/>
<line x1="1687.00" x2="1687.00" y1="842.0" y2="641.5"/>
<line x1="74.00" x2="74.00" y1="842.0" y2="641.5"/>
<line x1="218.00" x2="218.00" y1="842.0" y2="641.5"/>
<line x1="365.00" x2="365.00" y1="842.0" y2="641.5"/>
<line x1="505.00" x2="505.00" y1="842.0" y2="641.5"/>
<line x1="650.00" x2="650.00" y1="842.0" y2="641.5"/>
<line x1="797.00" x2="797.00" y1="842.0" y2="641.5"/>
<line x1="940.00" x2="940.00" y1="842.0" y2="641.5"/>
<line x1="1091.00" x2="1091.00" y1="842.0" y2="641.5"/>
<line x1="1239.00" x2="1239.00" y1="842.0" y2="641.5"/>
</g>
<g font-family="'DejaVu Sans','Liberation Sans',sans-serif" font-size="11.11" fill="#fff" text-anchor="middle" letter-spacing="-0.5">
<text x="116.46" y="830.60">KSE</text>
<text x="253.80" y="830.60">ETA</text>
<text x="494.16" y="830.60">NZC</text>
<text x="709.99" y="830.60">NDA</text>
<text x="852.25" y="830.60">SPE</text>
<text x="945.45" y="830.60">ARD</text>
<text x="1023.93" y="830.60">EGE</text>
<text x="1141.66" y="830.60">NTA</text>
<text x="1283.91" y="830.60">MON</text>
<text x="1342.78" y="830.60">URS</text>
<text x="1411.45" y="830.60">AHY</text>
<text x="1485.03" y="830.60">GUM</text>
<text x="1534.08" y="830.60">OHY</text>
<text x="1735.20" y="830.60">XHE</text>
<text x="1769.53" y="830.60">EVI</text>
<text x="175.32" y="814.60">AVB</text>
<text x="253.80" y="814.60">ELY</text>
<text x="322.48" y="814.60">CAM</text>
<text x="430.39" y="814.60">SSG</text>
<text x="577.55" y="814.60">PCA</text>
<text x="719.80" y="814.60">AUD</text>
<text x="808.10" y="814.60">AUR</text>
<text x="930.73" y="814.60">DSX</text>
<text x="1009.22" y="814.60">OCU</text>
<text x="1136.75" y="814.60">OER</text>
<text x="1254.48" y="814.60">DKD</text>
<text x="1303.53" y="814.60">DSV</text>
<text x="1352.59" y="814.60">ALY</text>
<text x="1406.54" y="814.60">JLE</text>
<text x="1470.31" y="814.60">SCC</text>
<text x="1558.61" y="814.60">FEV</text>
<text x="175.32" y="798.60">LYR</text>
<text x="371.53" y="798.60">JMC</text>
<text x="557.93" y="798.60">JPE</text>
<text x="670.75" y="798.60">PAU</text>
<text x="773.76" y="798.60">NIA</text>
<text x="1048.46" y="798.60">STA</text>
<text x="1205.43" y="798.60">NOO</text>
<text x="1352.59" y="798.60">COM</text>
<text x="1470.31" y="798.60">NCC</text>
<text x="1563.51" y="798.60">FED</text>
<text x="204.75" y="781.60">HVI</text>
<text x="410.77" y="781.60">ARI</text>
<text x="528.50" y="781.60">SZC</text>
<text x="616.79" y="781.60">CAP</text>
<text x="817.91" y="781.60">NUE</text>
<text x="960.16" y="781.60">OCT</text>
<text x="1058.27" y="781.60">ORI</text>
<text x="1185.81" y="781.60">AMO</text>
<text x="1254.48" y="781.60">DPC</text>
<text x="1328.06" y="781.60">XVI</text>
<text x="1406.54" y="781.60">QUA</text>
<text x="1558.61" y="781.60">AAN</text>
<text x="351.91" y="765.60">TAH</text>
<text x="430.39" y="765.60">JEA</text>
<text x="479.45" y="765.60">JIP</text>
<text x="538.31" y="765.60">PPS</text>
<text x="577.55" y="765.60">ZCS</text>
<text x="631.51" y="765.60">GDR</text>
<text x="969.97" y="765.60">DRA</text>
<text x="1072.98" y="765.60">LUM</text>
<text x="1112.23" y="765.60">RPU</text>
<text x="1176.00" y="765.60">THA</text>
<text x="1259.39" y="765.60">PSU</text>
<text x="1470.31" y="765.60">XCB</text>
<text x="430.39" y="748.60">JRC</text>
<text x="543.21" y="748.60">CAN</text>
<text x="577.55" y="748.60">FAN</text>
<text x="680.56" y="748.60">PER</text>
<text x="1048.46" y="748.60">CTA</text>
<text x="1264.29" y="748.60">HYD</text>
<text x="1480.12" y="748.60">XUM</text>
<text x="440.20" y="732.60">COR</text>
<text x="656.04" y="732.60">SDA</text>
<text x="1048.46" y="732.60">LMI</text>
<text x="1166.18" y="732.60">LEO</text>
<text x="1274.10" y="732.60">EHY</text>
<text x="1499.74" y="732.60">ECV</text>
<text x="602.08" y="716.60">JXA</text>
<text x="714.90" y="716.60">KCG</text>
<text x="1156.37" y="716.60">AND</text>
<text x="1274.10" y="716.60">DAD</text>
<text x="665.85" y="699.60">ERI</text>
<text x="1107.32" y="699.60">SLD</text>
<text x="1210.33" y="699.60">ORS</text>
<text x="1298.63" y="699.60">GEM</text>
<text x="1122.04" y="683.60">KUM</text>
</g>
<g stroke="#fff" stroke-width="2.08">
<path d="M112.85 834.00h8.34M117.02 829.83v8.34"/>
<path d="M240.83 834.00h8.34M245.00 829.83v8.34"/>
<path d="M510.81 834.00h8.34M514.98 829.83v8.34"/>
<path d="M706.83 834.00h8.34M711.00 829.83v8.34"/>
<path d="M832.84 834.00h8.34M837.01 829.83v8.34"/>
<path d="M961.80 834.00h8.34M965.97 829.83v8.34"/>
<path d="M985.84 834.00h8.34M990.01 829.83v8.34"/>
<path d="M1115.83 834.00h8.34M1120.00 829.83v8.34"/>
<path d="M1294.82 834.00h8.34M1298.99 829.83v8.34"/>
<path d="M1341.82 834.00h8.34M1345.99 829.83v8.34"/>
<path d="M1412.84 834.00h8.34M1417.01 829.83v8.34"/>
<path d="M1481.81 834.00h8.34M1485.98 829.83v8.34"/>
<path d="M1530.82 834.00h8.34M1534.99 829.83v8.34"/>
<path d="M1731.83 834.00h8.34M1736.00 829.83v8.34"/>
<path d="M1765.83 834.00h8.34M1770.00 829.83v8.34"/>
<path d="M171.81 818.00h8.34M175.98 813.83v8.34"/>
<path d="M255.84 818.00h8.34M260.01 813.83v8.34"/>
<path d="M322.84 818.00h8.34M327.01 813.83v8.34"/>
<path d="M436.84 818.00h8.34M441.01 813.83v8.34"/>
<path d="M598.81 818.00h8.34M602.98 813.83v8.34"/>
<path d="M716.83 818.00h8.34M721.00 813.83v8.34"/>
<path d="M792.82 818.00h8.34M796.99 813.83v8.34"/>
<path d="M938.85 818.00h8.34M943.02 813.83v8.34"/>
<path d="M1005.80 818.00h8.34M1009.97 813.83v8.34"/>
<path d="M1152.81 818.00h8.34M1156.98 813.83v8.34"/>
<path d="M1250.82 818.00h8.34M1254.99 813.83v8.34"/>
<path d="M1299.83 818.00h8.34M1304.00 813.83v8.34"/>
<path d="M1348.83 818.00h8.34M1353.00 813.83v8.34"/>
<path d="M1402.84 818.00h8.34M1407.01 813.83v8.34"/>
<path d="M1466.80 818.00h8.34M1470.97 813.83v8.34"/>
<path d="M1554.80 818.00h8.34M1558.97 813.83v8.34"/>
<path d="M173.82 802.00h8.34M177.99 797.83v8.34"/>
<path d="M377.83 802.00h8.34M382.00 797.83v8.34"/>
<path d="M544.81 802.00h8.34M548.98 797.83v8.34"/>
<path d="M681.81 802.00h8.34M685.98 797.83v8.34"/>
<path d="M740.82 802.00h8.34M744.99 797.83v8.34"/>
<path d="M1074.82 802.00h8.34M1078.99 797.83v8.34"/>
<path d="M1216.83 802.00h8.34M1221.00 797.83v8.34"/>
<path d="M1304.83 802.00h8.34M1309.00 797.83v8.34"/>
<path d="M1466.80 802.00h8.34M1470.97 797.83v8.34"/>
<path d="M1559.81 802.00h8.34M1563.98 797.83v8.34"/>
<path d="M201.83 785.00h8.34M206.00 780.83v8.34"/>
<path d="M399.81 785.00h8.34M403.98 780.83v8.34"/>
<path d="M524.84 785.00h8.34M529.01 780.83v8.34"/>
<path d="M638.84 785.00h8.34M643.01 780.83v8.34"/>
<path d="M814.84 785.00h8.34M819.01 780.83v8.34"/>
<path d="M958.81 785.00h8.34M962.98 780.83v8.34"/>
<path d="M1039.85 785.00h8.34M1044.02 780.83v8.34"/>
<path d="M1187.84 785.00h8.34M1192.01 780.83v8.34"/>
<path d="M1250.82 785.00h8.34M1254.99 780.83v8.34"/>
<path d="M1324.84 785.00h8.34M1329.01 780.83v8.34"/>
<path d="M1402.84 785.00h8.34M1407.01 780.83v8.34"/>
<path d="M1545.43 785.00h8.34M1549.60 780.83v8.34"/>
<path d="M355.81 769.00h8.34M359.98 764.83v8.34"/>
<path d="M425.80 769.00h8.34M429.97 764.83v8.34"/>
<path d="M475.84 769.00h8.34M480.01 764.83v8.34"/>
<path d="M534.85 769.00h8.34M539.02 764.83v8.34"/>
<path d="M570.80 769.00h8.34M574.97 764.83v8.34"/>
<path d="M630.84 769.00h8.34M635.01 764.83v8.34"/>
<path d="M973.82 769.00h8.34M977.99 764.83v8.34"/>
<path d="M1069.82 769.00h8.34M1073.99 764.83v8.34"/>
<path d="M1108.81 769.00h8.34M1112.98 764.83v8.34"/>
<path d="M1177.83 769.00h8.34M1182.00 764.83v8.34"/>
<path d="M1255.83 769.00h8.34M1260.00 764.83v8.34"/>
<path d="M1466.80 769.00h8.34M1470.97 764.83v8.34"/>
<path d="M426.83 752.00h8.34M431.00 747.83v8.34"/>
<path d="M539.85 752.00h8.34M544.02 747.83v8.34"/>
<path d="M573.84 752.00h8.34M578.01 747.83v8.34"/>
<path d="M703.83 752.00h8.34M708.00 747.83v8.34"/>
<path d="M1093.80 752.00h8.34M1097.97 747.83v8.34"/>
<path d="M1270.84 752.00h8.34M1275.01 747.83v8.34"/>
<path d="M1476.81 752.00h8.34M1480.98 747.83v8.34"/>
<path d="M436.84 736.00h8.34M441.01 731.83v8.34"/>
<path d="M630.84 736.00h8.34M635.01 731.83v8.34"/>
<path d="M1038.82 736.00h8.34M1042.99 731.83v8.34"/>
<path d="M1167.83 736.00h8.34M1172.00 731.83v8.34"/>
<path d="M1274.81 736.00h8.34M1278.98 731.83v8.34"/>
<path d="M1496.82 736.00h8.34M1500.99 731.83v8.34"/>
<path d="M598.81 720.00h8.34M602.98 715.83v8.34"/>
<path d="M726.84 720.00h8.34M731.01 715.83v8.34"/>
<path d="M1187.84 720.00h8.34M1192.01 715.83v8.34"/>
<path d="M1270.84 720.00h8.34M1275.01 715.83v8.34"/>
<path d="M686.81 703.00h8.34M690.98 698.83v8.34"/>
<path d="M1101.85 703.00h8.34M1106.02 698.83v8.34"/>
<path d="M1206.82 703.00h8.34M1210.99 698.83v8.34"/>
<path d="M1299.83 703.00h8.34M1304.00 698.83v8.34"/>
<path d="M1118.82 687.00h8.34M1122.99 682.83v8.34"/>
</g>
<rect x="19.5" y="641.5" width="1765.9" height="201.0" fill="none" stroke="#fff" stroke-width="1.11"/>
<g font-family="'DejaVu Sans','Liberation Sans',sans-serif" font-size="13.89" fill="#fff" text-anchor="middle">
<line x1="19.50" x2="19.50" y1="842.5" y2="847.4" stroke="#fff" stroke-width="1.11"/>
<text x="20.10" y="862.1" letter-spacing="-0.6">0</text>
<line x1="264.76" x2="264.76" y1="842.5" y2="847.4" stroke="#fff" stroke-width="1.11"/>
<text x="263.81" y="862.1" letter-spacing="-0.6">50</text>
<line x1="510.03" x2="510.03" y1="842.5" y2="847.4" stroke="#fff" stroke-width="1.11"/>
<text x="509.08" y="862.1" letter-spacing="-0.6">100</text>
<line x1="755.29" x2="755.29" y1="842.5" y2="847.4" stroke="#fff" stroke-width="1.11"/>
<text x="754.34" y="862.1" letter-spacing="-0.6">150</text>
<line x1="1000.56" x2="1000.56" y1="842.5" y2="847.4" stroke="#fff" stroke-width="1.11"/>
<text x="999.61" y="862.1" letter-spacing="-0.6">200</text>
<line x1="1245.82" x2="1245.82" y1="842.5" y2="847.4" stroke="#fff" stroke-width="1.11"/>
<text x="1244.87" y="862.1" letter-spacing="-0.6">250</text>
<line x1="1491.08" x2="1491.08" y1="842.5" y2="847.4" stroke="#fff" stroke-width="1.11"/>
<text x="1490.13" y="862.1" letter-spacing="-0.6">300</text>
<line x1="1736.35" x2="1736.35" y1="842.5" y2="847.4" stroke="#fff" stroke-width="1.11"/>
<text x="1735.40" y="862.1" letter-spacing="-0.6">350</text>
<text x="902.5" y="882.0">Solar longitude (deg)</text>
</g>
</svg>
</body></html>
